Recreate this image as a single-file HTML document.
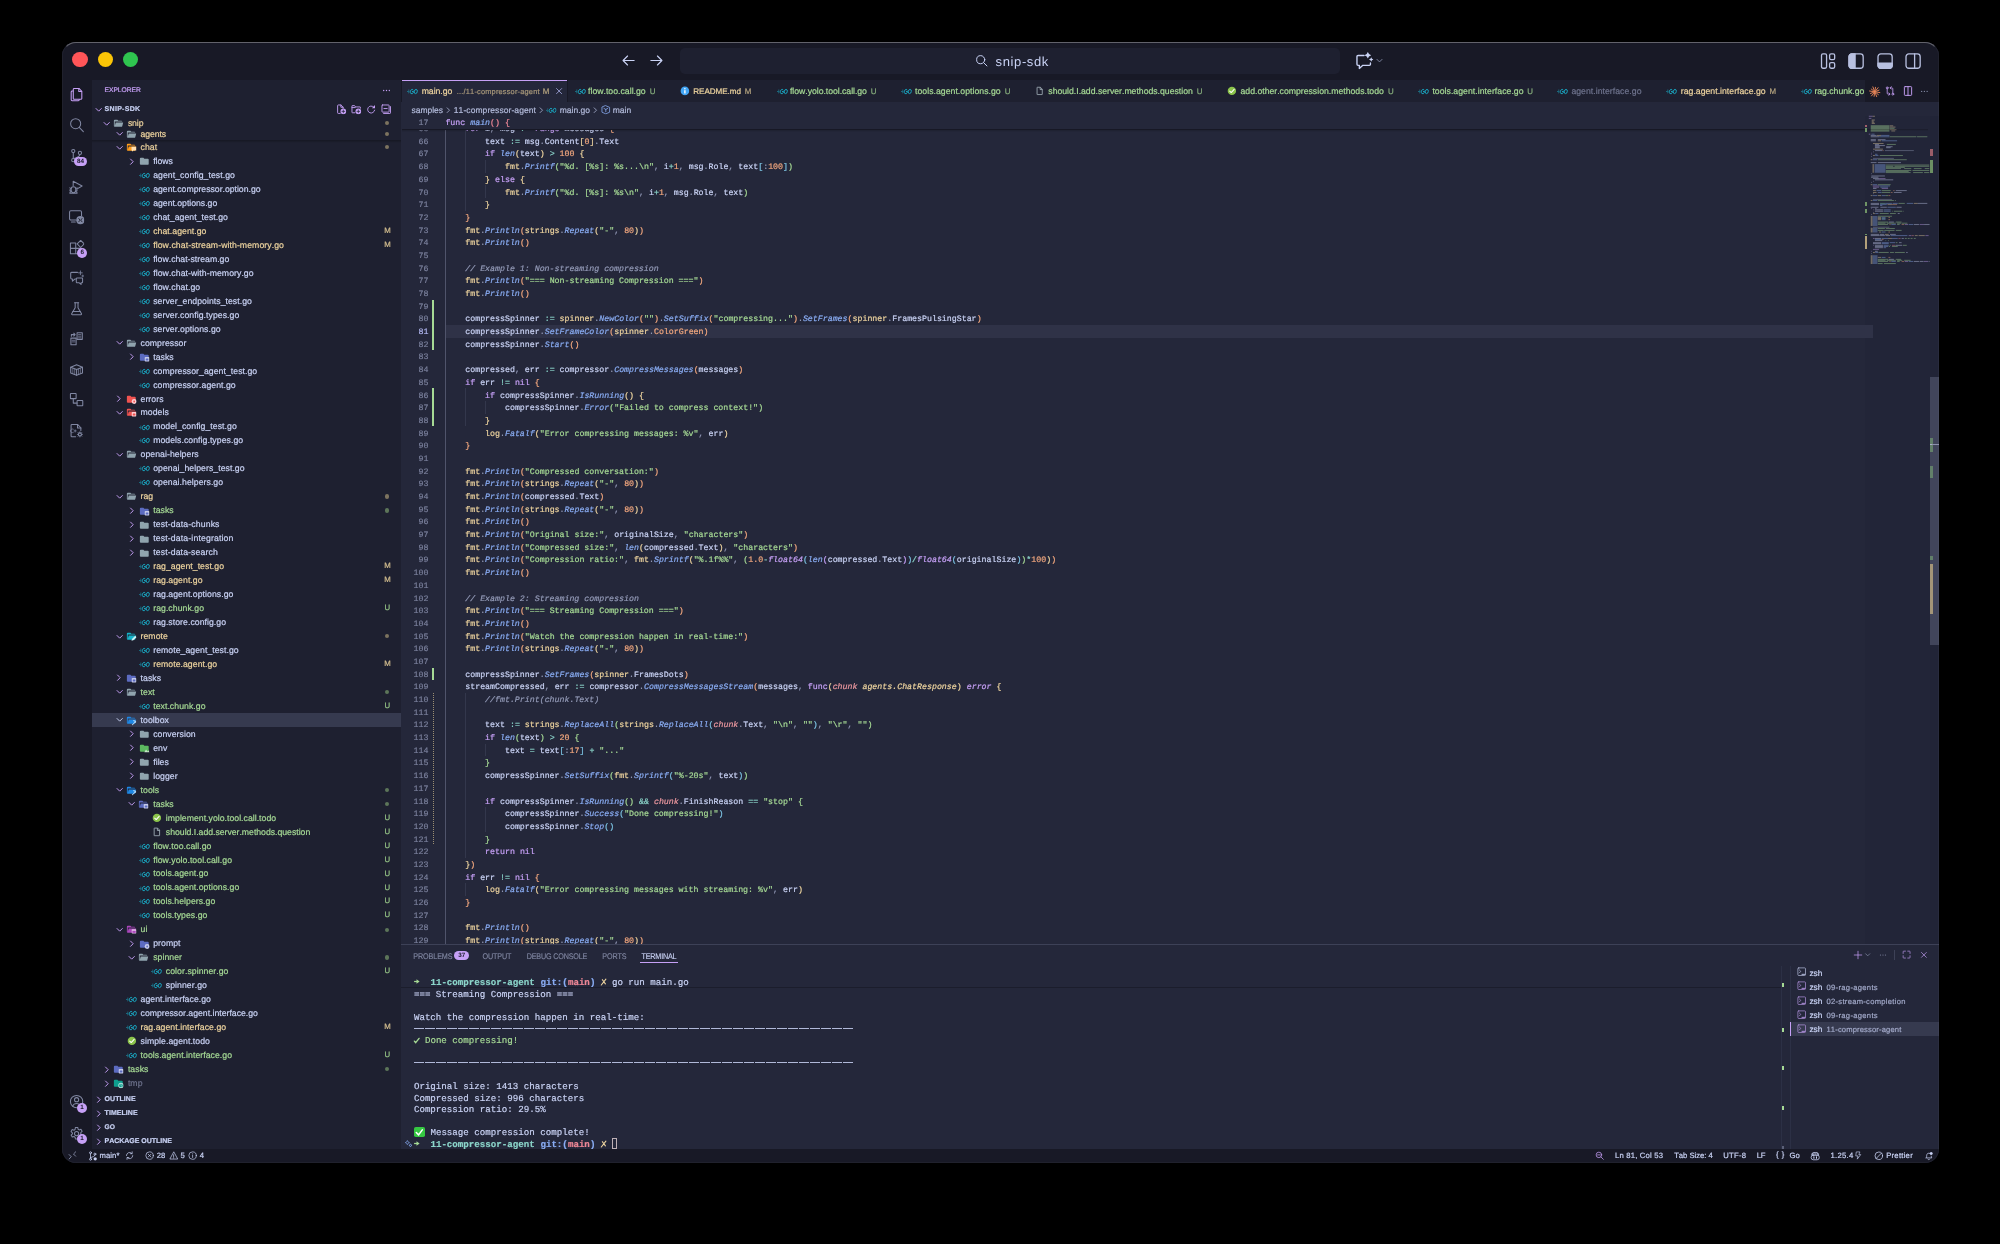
<!DOCTYPE html><html><head><meta charset="utf-8"><title>snip-sdk</title><style>
html,body{margin:0;padding:0;background:#000;overflow:hidden;}
body{width:2000px;height:1244px;position:relative;overflow:hidden;font-family:"Liberation Sans",sans-serif;font-kerning:none;-webkit-font-smoothing:antialiased;text-rendering:geometricPrecision;}
.win{position:absolute;left:62px;top:42px;width:1876.700px;height:1120.600px;border-radius:14px;overflow:hidden;background:#24273a;}
.page{will-change:transform;position:absolute;left:-62px;top:-42px;width:2000px;height:1244px;}
.t{position:absolute;white-space:pre;display:block;-webkit-text-stroke:0.2px currentColor;}
.c{-webkit-text-stroke:0.2px currentColor;position:absolute;white-space:pre;font-family:"Liberation Mono",monospace;font-size:8.274px;line-height:13px;height:13px;}
.m{-webkit-text-stroke:0.18px currentColor;position:absolute;white-space:pre;font-family:"Liberation Mono",monospace;font-size:9.165px;line-height:13px;height:13px;}
.edge{position:absolute;left:62px;top:42px;width:1876.700px;height:1120.600px;border-radius:14px;box-sizing:border-box;border:1px solid rgba(255,255,255,.035);border-top-color:rgba(255,255,255,.32);pointer-events:none;}
svg{overflow:visible}
</style></head><body><svg width="0" height="0" style="position:absolute"><defs><symbol id="fd" viewBox="0 0 24 24"><path d="M10 4H4c-1.11 0-2 .89-2 2v12c0 1.1.9 2 2 2h16c1.1 0 2-.9 2-2V8c0-1.11-.9-2-2-2h-8l-2-2z" fill="#90a4ae"/></symbol><symbol id="fdo" viewBox="0 0 24 24"><path d="M19 20H4c-1.11 0-2-.9-2-2V6c0-1.11.89-2 2-2h6l2 2h7c1.1 0 2 .9 2 2H4v10l2.14-8h17.07l-2.28 8.5c-.23.87-1.01 1.5-1.93 1.5z" fill="#90a4ae"/></symbol><symbol id="f-chat-o" viewBox="0 0 24 24"><path d="M19 20H4c-1.11 0-2-.9-2-2V6c0-1.11.89-2 2-2h6l2 2h7c1.1 0 2 .9 2 2H4v10l2.14-8h17.07l-2.28 8.5c-.23.87-1.01 1.5-1.93 1.5z" fill="#ff9d1c"/><path d="M12.5 11h11v8h-7l-3 3v-3h-1z" fill="#ffe0b2"/></symbol><symbol id="f-tasks" viewBox="0 0 24 24"><path d="M10 4H4c-1.11 0-2 .89-2 2v12c0 1.1.9 2 2 2h16c1.1 0 2-.9 2-2V8c0-1.11-.9-2-2-2h-8l-2-2z" fill="#5c6bc0"/><rect x="13" y="11.5" width="10.5" height="10" rx="1.6" fill="#c5cae9"/><rect x="15.3" y="15" width="6" height="4" rx="0.8" fill="#5c6bc0"/></symbol><symbol id="f-tasks-o" viewBox="0 0 24 24"><path d="M19 20H4c-1.11 0-2-.9-2-2V6c0-1.11.89-2 2-2h6l2 2h7c1.1 0 2 .9 2 2H4v10l2.14-8h17.07l-2.28 8.5c-.23.87-1.01 1.5-1.93 1.5z" fill="#5c6bc0"/><rect x="13" y="11.5" width="10.5" height="10" rx="1.6" fill="#c5cae9"/><rect x="15.3" y="15" width="6" height="4" rx="0.8" fill="#5c6bc0"/></symbol><symbol id="f-err" viewBox="0 0 24 24"><path d="M10 4H4c-1.11 0-2 .89-2 2v12c0 1.1.9 2 2 2h16c1.1 0 2-.9 2-2V8c0-1.11-.9-2-2-2h-8l-2-2z" fill="#ef5350"/><circle cx="18.5" cy="17" r="5.6" fill="#ffcdd2"/><circle cx="18.5" cy="17" r="2" fill="#ef5350"/></symbol><symbol id="f-models-o" viewBox="0 0 24 24"><path d="M19 20H4c-1.11 0-2-.9-2-2V6c0-1.11.89-2 2-2h6l2 2h7c1.1 0 2 .9 2 2H4v10l2.14-8h17.07l-2.28 8.5c-.23.87-1.01 1.5-1.93 1.5z" fill="#ef5350"/><rect x="13" y="11.5" width="10.5" height="10" rx="1.6" fill="#ffcdd2"/><rect x="15.3" y="15" width="6" height="4" rx="0.8" fill="#ef5350"/></symbol><symbol id="f-remote-o" viewBox="0 0 24 24"><path d="M19 20H4c-1.11 0-2-.9-2-2V6c0-1.11.89-2 2-2h6l2 2h7c1.1 0 2 .9 2 2H4v10l2.14-8h17.07l-2.28 8.5c-.23.87-1.01 1.5-1.93 1.5z" fill="#16b3c9"/><path d="M12.5 22l1-4 7.5-7 3 3-7.5 7z" fill="#c9f1f6"/></symbol><symbol id="f-tools-o" viewBox="0 0 24 24"><path d="M19 20H4c-1.11 0-2-.9-2-2V6c0-1.11.89-2 2-2h6l2 2h7c1.1 0 2 .9 2 2H4v10l2.14-8h17.07l-2.28 8.5c-.23.87-1.01 1.5-1.93 1.5z" fill="#1e88e5"/><path d="M13 22.5l7.5-8.2 2.6 2.4-1.3 1.3-1.2-.9-6.2 6.6z" fill="#bbdefb"/><path d="M17 11.5l6.5 2.2-1.2 2.2-6-2.4z" fill="#bbdefb"/></symbol><symbol id="f-env" viewBox="0 0 24 24"><path d="M10 4H4c-1.11 0-2 .89-2 2v12c0 1.1.9 2 2 2h16c1.1 0 2-.9 2-2V8c0-1.11-.9-2-2-2h-8l-2-2z" fill="#5cb860"/><path d="M12 21l4-6 3 4 2-2.5 3 4.5z" fill="#c8e6c9"/></symbol><symbol id="f-ui-o" viewBox="0 0 24 24"><path d="M19 20H4c-1.11 0-2-.9-2-2V6c0-1.11.89-2 2-2h6l2 2h7c1.1 0 2 .9 2 2H4v10l2.14-8h17.07l-2.28 8.5c-.23.87-1.01 1.5-1.93 1.5z" fill="#ab47bc"/><rect x="13" y="12" width="10.5" height="9.5" rx="1" fill="#e1bee7"/><rect x="14.5" y="15.5" width="7.5" height="4.6" fill="#ab47bc"/></symbol><symbol id="f-prompt" viewBox="0 0 24 24"><path d="M10 4H4c-1.11 0-2 .89-2 2v12c0 1.1.9 2 2 2h16c1.1 0 2-.9 2-2V8c0-1.11-.9-2-2-2h-8l-2-2z" fill="#5c6bc0"/><circle cx="18.5" cy="17" r="5.6" fill="#c5cae9"/><circle cx="18.5" cy="17" r="2" fill="#5c6bc0"/></symbol><symbol id="f-tmp" viewBox="0 0 24 24"><path d="M10 4H4c-1.11 0-2 .89-2 2v12c0 1.1.9 2 2 2h16c1.1 0 2-.9 2-2V8c0-1.11-.9-2-2-2h-8l-2-2z" fill="#0e9e8e"/><circle cx="18" cy="17" r="6" fill="#b2dfdb"/><circle cx="18" cy="17" r="4.2" fill="#0e9e8e"/><path d="M18 13.8v3.4l2.3 1.5" stroke="#b2dfdb" stroke-width="1.5" fill="none"/></symbol><symbol id="go" viewBox="0 0 32 32"><g fill="none" stroke="#19b4cf" stroke-linecap="butt" transform="skewX(-8) translate(2.300 0)"><g stroke-width="1.400"><path d="M2.500 12.300H6.500"/><path d="M0 16.200H6.500"/><path d="M3.500 20H6.500"/></g><g stroke-width="2.500"><path d="M18 12.200a5 6.200 0 1 0 1.100 6.300v-2.300h-4.300"/><ellipse cx="25.800" cy="16.200" rx="4.400" ry="6.200"/></g></g></symbol><symbol id="todo" viewBox="0 0 24 24"><circle cx="12" cy="12" r="10.3" fill="#8bc34a"/><path d="M6.7 12.4l3.6 3.6 7.2-7.6" fill="none" stroke="#fff" stroke-width="2.6" stroke-linecap="round" stroke-linejoin="round"/></symbol><symbol id="doc" viewBox="0 0 24 24"><path d="M6 2.5h8l5 5V21a.6.6 0 0 1-.6.6H6a.6.6 0 0 1-.6-.6V3.100a.6.6 0 0 1 .6-.6zM13.5 3v5.500h5.500" fill="none" stroke="#b4c2cb" stroke-width="1.900" stroke-linejoin="round"/></symbol><symbol id="info" viewBox="0 0 24 24"><circle cx="12" cy="12" r="10.5" fill="#42a5f5"/><rect x="10.300" y="10.300" width="3.400" height="8" fill="#fff"/><circle cx="12" cy="6.800" r="2" fill="#fff"/></symbol><symbol id="chev-d" viewBox="0 0 16 16"><g fill="none" stroke="currentColor" stroke-width="1.65" stroke-linecap="round" stroke-linejoin="round"><path d="M3.500 6l4.500 4.500L12.500 6"/></g></symbol><symbol id="chev-r" viewBox="0 0 16 16"><g fill="none" stroke="currentColor" stroke-width="1.65" stroke-linecap="round" stroke-linejoin="round"><path d="M6 3.500l4.500 4.500L6 12.500"/></g></symbol><symbol id="a-files" viewBox="0 0 16 16"><g fill="none" stroke="currentColor" stroke-width="1.1" stroke-linecap="round" stroke-linejoin="round"><path d="M5.500 1.500h5l3 3v7.500a1 1 0 0 1-1 1h-7a1 1 0 0 1-1-1v-9.500a1 1 0 0 1 1-1z"/><path d="M10.300 1.700v3h3"/><path d="M4.300 4.200h-1a1 1 0 0 0-1 1v8.300a1 1 0 0 0 1 1h6.500a1 1 0 0 0 1-1v-.4"/></g></symbol><symbol id="a-search" viewBox="0 0 16 16"><g fill="none" stroke="currentColor" stroke-width="1.1" stroke-linecap="round" stroke-linejoin="round"><circle cx="7" cy="6" r="5.300"/><path d="M10.800 9.800l4.300 4.600"/></g></symbol><symbol id="a-scm" viewBox="0 0 16 16"><g fill="none" stroke="currentColor" stroke-width="1.1" stroke-linecap="round" stroke-linejoin="round"><circle cx="4.500" cy="3.200" r="1.700"/><circle cx="4.500" cy="12.800" r="1.700"/><circle cx="11.500" cy="5.200" r="1.700"/><path d="M4.500 4.900v6.200"/><path d="M11.500 6.900c0 2.600-3.500 3-7 4.300"/></g></symbol><symbol id="a-debug" viewBox="0 0 16 16"><g fill="none" stroke="currentColor" stroke-width="1.1" stroke-linecap="round" stroke-linejoin="round"><path d="M4.400 7V2.300l9.400 5-5.200 3.100"/><ellipse cx="4.700" cy="11.300" rx="2.600" ry="3.100"/><path d="M0.900 9.300l1.300.8M0.700 11.700h1.300M0.900 14l1.300-.8M8.500 9.300l-1.300.8M8.700 11.700h-1.300M8.500 14l-1.300-.8M0.900 15.100h7.600"/></g></symbol><symbol id="a-remote" viewBox="0 0 16 16"><g fill="none" stroke="currentColor" stroke-width="1.1" stroke-linecap="round" stroke-linejoin="round"><path d="M7.500 10.600H2a1.400 1.400 0 0 1-1.400-1.400V2.200A1.400 1.400 0 0 1 2 .8h9.800a1.400 1.400 0 0 1 1.400 1.400V6"/><path d="M2.600 12.600h4"/><circle cx="12" cy="10.700" r="4.300" fill="currentColor" stroke="none"/><path d="M10.300 9l1.300 1.700-1.300 1.700M13.700 9l-1.300 1.700 1.300 1.700" stroke="#181926" stroke-width="0.900"/></g></symbol><symbol id="a-ext" viewBox="0 0 16 16"><g fill="none" stroke="currentColor" stroke-width="1.1" stroke-linecap="round" stroke-linejoin="round"><path d="M1.500 3.200h5.600v11.200H1.500zM1.500 8.800h11.200v5.600H7.100V8.800"/><path d="M12.300 0.500l3.700 3.700-3.700 3.700-3.700-3.700z"/></g></symbol><symbol id="a-chat" viewBox="0 0 16 16"><g fill="none" stroke="currentColor" stroke-width="1.1" stroke-linecap="round" stroke-linejoin="round"><path d="M9 2.500H2.800a1 1 0 0 0-1 1v5a1 1 0 0 0 1 1h.8v2.300l2.500-2.300H7"/><path d="M8.500 8.500h5a.8.8 0 0 1 .8.800v3.400a.8.800 0 0 1-.8.800h-.8v1.700l-1.900-1.700H8.500a.8.800 0 0 1-.8-.8V9.300a.8.800 0 0 1 .8-.8z"/><path d="M12 1v4M10 3h4" stroke-width="0.900"/><path d="M14.500 5.300v2M13.500 6.300h2" stroke-width="0.800"/></g></symbol><symbol id="a-beaker" viewBox="0 0 16 16"><g fill="none" stroke="currentColor" stroke-width="1.1" stroke-linecap="round" stroke-linejoin="round"><path d="M5.800 1.800h4.400"/><path d="M6.500 1.800v5.200L2.800 13.400a.7.700 0 0 0 .6 1h9.200a.7.700 0 0 0 .6-1L9.500 7V1.800"/><path d="M4 11h8"/></g></symbol><symbol id="a-compare" viewBox="0 0 16 16"><g fill="none" stroke="currentColor" stroke-width="1.1" stroke-linecap="round" stroke-linejoin="round"><path d="M8.500 1.800h5.500v7H8.500z"/><path d="M10 3.800h2.500M10 5.500h2.500M10 7.200h2.500" stroke-width="0.800"/><path d="M2 7.500h5.500v7H2z"/><path d="M3.300 9.800h3M3.300 11.500h3" stroke-width="0.800"/><path d="M2.500 5.500V3.800h4M5 2.300l1.500 1.500L5 5.300"/></g></symbol><symbol id="a-container" viewBox="0 0 16 16"><g fill="none" stroke="currentColor" stroke-width="1.1" stroke-linecap="round" stroke-linejoin="round"><path d="M1.800 5.500L8 3l6.200 2.500v6L8 14l-6.200-2.500z"/><path d="M1.800 5.500L8 8l6.200-2.500M8 8v6"/><path d="M4 7v5M6 7.800v5M10 7.800v5M12 7v5" stroke-width="0.700"/></g></symbol><symbol id="a-flow" viewBox="0 0 16 16"><g fill="none" stroke="currentColor" stroke-width="1.1" stroke-linecap="round" stroke-linejoin="round"><rect x="1.500" y="1.500" width="6" height="5.500" rx="0.500"/><rect x="8.500" y="9" width="6" height="5.500" rx="0.500"/><path d="M4.500 7v4.700h4"/></g></symbol><symbol id="a-filegear" viewBox="0 0 16 16"><g fill="none" stroke="currentColor" stroke-width="1.1" stroke-linecap="round" stroke-linejoin="round"><path d="M7 14.500H3a.8.800 0 0 1-.8-.8V2.300a.8.800 0 0 1 .8-.8h6l3.500 3.500v3"/><path d="M9 1.700v3.500h3.500"/><path d="M4.500 6.500a2 2 0 1 0 0 3.500M6.500 7.200v2.300M5.400 8.300h2.200" stroke-width="0.800"/><circle cx="11.500" cy="12" r="1.600"/><path d="M11.500 9.300v1M11.500 13.700v1M8.800 12h1M13.200 12h1M9.600 10.100l.7.700M12.700 13.200l.7.700M9.600 13.900l.7-.7M12.700 10.800l.7-.7" stroke-width="0.900"/></g></symbol><symbol id="a-account" viewBox="0 0 16 16"><g fill="none" stroke="currentColor" stroke-width="1.1" stroke-linecap="round" stroke-linejoin="round"><circle cx="8" cy="8" r="6.500"/><circle cx="8" cy="6" r="2.200"/><path d="M3.800 12.800c.8-2 2.300-2.800 4.200-2.800s3.400.8 4.200 2.800"/></g></symbol><symbol id="a-gear" viewBox="0 0 16 16"><g fill="none" stroke="currentColor" stroke-width="1.1" stroke-linecap="round" stroke-linejoin="round"><circle cx="8" cy="8" r="2.200"/><path d="M6.800 1.500h2.400l.4 1.900 1.200.7 1.800-.6 1.200 2.100-1.400 1.300v1.400l1.400 1.300-1.200 2.100-1.800-.6-1.200.7-.4 1.900H6.800l-.4-1.900-1.200-.7-1.800.6-1.200-2.100 1.400-1.300V7.200L2.200 5.900l1.200-2.100 1.800.6 1.200-.7z"/></g></symbol><symbol id="h-newfile" viewBox="0 0 16 16"><g fill="none" stroke="currentColor" stroke-width="1.4" stroke-linecap="round" stroke-linejoin="round"><path d="M6.500 14.500H3.500a1 1 0 0 1-1-1V2.500a1 1 0 0 1 1-1h4l3.500 3.500V6.500"/><path d="M7.500 1.500V5H11"/><circle cx="11.300" cy="11.400" r="4.300" fill="currentColor" stroke="none"/><path d="M11.300 9.300v4.200M9.200 11.400h4.200" stroke="#1e2030" stroke-width="1.100"/></g></symbol><symbol id="h-newfolder" viewBox="0 0 16 16"><g fill="none" stroke="currentColor" stroke-width="1.4" stroke-linecap="round" stroke-linejoin="round"><path d="M6 13.500H2a.5.500 0 0 1-.5-.5V3a.5.500 0 0 1 .5-.5h3.500l1.500 2H14a.5.500 0 0 1 .5.500v1.500"/><path d="M1.500 5.500h5"/><circle cx="11.300" cy="11.400" r="4.300" fill="currentColor" stroke="none"/><path d="M11.300 9.300v4.200M9.200 11.400h4.200" stroke="#1e2030" stroke-width="1.100"/></g></symbol><symbol id="h-refresh" viewBox="0 0 16 16"><g fill="none" stroke="currentColor" stroke-width="1.4" stroke-linecap="round" stroke-linejoin="round"><path d="M13.300 9.500A5.400 5.400 0 1 1 11.600 4.500"/><path d="M13.900 1.600V6.400H9.100z" fill="currentColor" stroke="none"/></g></symbol><symbol id="h-collapse" viewBox="0 0 16 16"><g fill="none" stroke="currentColor" stroke-width="1.4" stroke-linecap="round" stroke-linejoin="round"><rect x="1.500" y="1.500" width="11" height="11" rx="1"/><path d="M4.500 7h5"/><path d="M4 14.600h9.600a1 1 0 0 0 1-1V4"/></g></symbol><symbol id="arrow-l" viewBox="0 0 16 16"><g fill="none" stroke="currentColor" stroke-width="1.2" stroke-linecap="round" stroke-linejoin="round"><path d="M14 8H2.500M7 3.200L2.200 8 7 12.800"/></g></symbol><symbol id="arrow-r" viewBox="0 0 16 16"><g fill="none" stroke="currentColor" stroke-width="1.2" stroke-linecap="round" stroke-linejoin="round"><path d="M2 8h11.500M9 3.200L13.800 8 9 12.800"/></g></symbol><symbol id="t-chat" viewBox="0 0 17 16"><g fill="none" stroke="currentColor" stroke-width="1.25" stroke-linecap="round" stroke-linejoin="round"><path d="M8.300 3.200H2.800a1 1 0 0 0-1 1v7a1 1 0 0 0 1 1H4v3l3.200-3h6a1 1 0 0 0 1-1V10"/><path d="M11.8 -0.2Q12.358 2.342 14.9 2.9Q12.358 3.458 11.8 6Q11.242 3.458 8.7 2.9Q11.242 2.342 11.8 -0.2z" fill="currentColor" stroke="none"/><path d="M14.9 4.8Q15.278 6.522 17 6.9Q15.278 7.278 14.9 9Q14.522 7.278 12.8 6.9Q14.522 6.522 14.9 4.8z" fill="currentColor" stroke="none"/></g></symbol><symbol id="l-custom" viewBox="0 0 16 16"><g fill="none" stroke="currentColor" stroke-width="1.3" stroke-linecap="round" stroke-linejoin="round"><rect x="1.500" y="0.900" width="5" height="14.200" rx="1.400"/><rect x="9.500" y="0.900" width="5" height="5.600" rx="1.400"/><rect x="9.500" y="9.500" width="5" height="5.600" rx="1.400"/></g></symbol><symbol id="l-left" viewBox="0 0 16 16"><g fill="none" stroke="currentColor" stroke-width="1.3" stroke-linecap="round" stroke-linejoin="round"><rect x="1" y="0.900" width="14" height="14.200" rx="2.800"/><path d="M3.800 0.900H7V15.100H3.800A2.800 2.800 0 0 1 1 12.300V3.700A2.800 2.800 0 0 1 3.800 0.900z" fill="currentColor"/></g></symbol><symbol id="l-bottom" viewBox="0 0 16 16"><g fill="none" stroke="currentColor" stroke-width="1.3" stroke-linecap="round" stroke-linejoin="round"><rect x="1" y="0.900" width="14" height="14.200" rx="2.800"/><path d="M1 10H15V12.300A2.800 2.800 0 0 1 12.200 15.100H3.800A2.800 2.800 0 0 1 1 12.300z" fill="currentColor"/></g></symbol><symbol id="l-right" viewBox="0 0 16 16"><g fill="none" stroke="currentColor" stroke-width="1.3" stroke-linecap="round" stroke-linejoin="round"><rect x="1" y="0.900" width="14" height="14.200" rx="2.800"/><path d="M9.500 0.900V15.100"/></g></symbol><symbol id="spark" viewBox="0 0 16 16"><path d="M9.58 8.24L15.22 9.09M9.25 9.00L12.92 11.93M8.58 9.49L10.66 14.80M7.76 9.58L7.06 14.23M7.00 9.25L3.45 13.71M6.51 8.58L2.13 10.30M6.42 7.76L0.78 6.91M6.75 7.00L3.08 4.07M7.42 6.51L5.34 1.20M8.24 6.42L8.94 1.77M9.00 6.75L12.55 2.29M9.49 7.42L13.87 5.70" stroke="#ef8a5a" stroke-width="1.25" stroke-linecap="round" fill="none"/><circle cx="8" cy="8" r="1.6" fill="#ef8a5a"/></symbol><symbol id="t-compare" viewBox="0 0 16 16"><g fill="none" stroke="currentColor" stroke-width="1.3" stroke-linecap="round" stroke-linejoin="round"><circle cx="3.500" cy="3" r="1.500"/><circle cx="12.500" cy="13" r="1.500"/><path d="M3.500 4.500v7a1.500 1.500 0 0 0 1.500 1.500h2.500M6 11l2 2-2 2"/><path d="M12.500 11.500v-7a1.500 1.500 0 0 0-1.500-1.500H8.500M10 5L8 3l2-2"/></g></symbol><symbol id="t-split" viewBox="0 0 16 16"><g fill="none" stroke="currentColor" stroke-width="1.5" stroke-linecap="round" stroke-linejoin="round"><rect x="2.200" y="1" width="11.600" height="14" rx="1.200"/><path d="M8 1v14"/></g></symbol><symbol id="dots" viewBox="0 0 16 16"><g fill="currentColor"><circle cx="3" cy="8" r="1.200"/><circle cx="8" cy="8" r="1.200"/><circle cx="13" cy="8" r="1.200"/></g></symbol><symbol id="x" viewBox="0 0 16 16"><g fill="none" stroke="currentColor" stroke-width="1.4" stroke-linecap="round" stroke-linejoin="round"><path d="M3 3l10 10M13 3L3 13"/></g></symbol><symbol id="sym-method" viewBox="0 0 16 16"><g fill="none" stroke="currentColor" stroke-width="1.3" stroke-linecap="round" stroke-linejoin="round"><path d="M8 1.200l6.400 2.800v8L8 14.800 1.600 12V4z"/><path d="M4.800 5.600L8 7.400l3.200-1.800M8 7.400V11.200"/></g></symbol><symbol id="plus" viewBox="0 0 16 16"><g fill="none" stroke="currentColor" stroke-width="1.15" stroke-linecap="round" stroke-linejoin="round"><path d="M8 2v12M2 8h12"/></g></symbol><symbol id="maximize" viewBox="0 0 16 16"><g fill="none" stroke="currentColor" stroke-width="1.15" stroke-linecap="round" stroke-linejoin="round"><path d="M2 6V3a1 1 0 0 1 1-1h3M10 2h3a1 1 0 0 1 1 1v3M14 10v3a1 1 0 0 1-1 1h-3M6 14H3a1 1 0 0 1-1-1v-3"/></g></symbol><symbol id="term" viewBox="0 0 16 16"><g fill="none" stroke="currentColor" stroke-width="1.05" stroke-linecap="round" stroke-linejoin="round"><rect x="1.500" y="1.500" width="13" height="13" rx="1.500"/><path d="M4 5l2.500 2.500L4 10"/><path d="M8.500 12.500h5" stroke-width="1.500"/></g></symbol><symbol id="s-remote" viewBox="0 0 16 16"><g fill="none" stroke="currentColor" stroke-width="1.5" stroke-linecap="round" stroke-linejoin="round"><path d="M2 6.500l4 4-4 4M14 1.500l-4 4 4 4" /></g></symbol><symbol id="s-branch" viewBox="0 0 16 16"><g fill="none" stroke="currentColor" stroke-width="1.2" stroke-linecap="round" stroke-linejoin="round"><circle cx="4" cy="2.800" r="1.600"/><circle cx="4" cy="13.200" r="1.600"/><circle cx="11" cy="5" r="1.600"/><path d="M4 4.400v7.200M11 6.600c0 2.500-3.500 2.500-7 4"/><circle cx="11.500" cy="12.500" r="2.600" fill="currentColor" stroke="none"/></g></symbol><symbol id="s-sync" viewBox="0 0 16 16"><g fill="none" stroke="currentColor" stroke-width="1.2" stroke-linecap="round" stroke-linejoin="round"><path d="M2.500 8a5.500 5.500 0 0 1 9.600-3.600M13.500 8a5.500 5.500 0 0 1-9.600 3.600"/><path d="M12.500 1.500v3.200H9.300M3.500 14.500v-3.200h3.200"/></g></symbol><symbol id="s-error" viewBox="0 0 16 16"><g fill="none" stroke="currentColor" stroke-width="1.2" stroke-linecap="round" stroke-linejoin="round"><circle cx="8" cy="8" r="6.500"/><path d="M5.500 5.500l5 5M10.500 5.500l-5 5"/></g></symbol><symbol id="s-warn" viewBox="0 0 16 16"><g fill="none" stroke="currentColor" stroke-width="1.2" stroke-linecap="round" stroke-linejoin="round"><path d="M8 2L1.500 14h13z"/><path d="M8 6.500v4M8 12v.3"/></g></symbol><symbol id="s-info" viewBox="0 0 16 16"><g fill="none" stroke="currentColor" stroke-width="1.2" stroke-linecap="round" stroke-linejoin="round"><circle cx="8" cy="8" r="6.500"/><path d="M8 7.300v4M8 4.800v.3"/></g></symbol><symbol id="s-zoom" viewBox="0 0 16 16"><g fill="none" stroke="currentColor" stroke-width="1.3" stroke-linecap="round" stroke-linejoin="round"><circle cx="6.800" cy="6.800" r="4.800"/><path d="M10.300 10.300l4.200 4.200M4.500 6.800h4.600"/></g></symbol><symbol id="s-copilot" viewBox="0 0 16 16"><g fill="none" stroke="currentColor" stroke-width="1.2" stroke-linecap="round" stroke-linejoin="round"><path d="M3 6.500c0-2.500 1.500-4 5-4s5 1.500 5 4"/><rect x="1.800" y="6.200" width="12.400" height="7.300" rx="3.200"/><path d="M6 9v2M10 9v2" stroke-width="1.600"/><path d="M3.500 3.500c1.500-1 3-1 4.500 0 1.500-1 3-1 4.500 0v2.500c-1.500 1-3 1-4.500 0-1.500 1-3 1-4.500 0z"/></g></symbol><symbol id="s-zap" viewBox="0 0 16 16"><g fill="none" stroke="currentColor" stroke-width="1.2" stroke-linecap="round" stroke-linejoin="round"><path d="M5 1.500h6l-2 5h3.500L6 15l1.500-6H4z"/></g></symbol><symbol id="s-prettier" viewBox="0 0 16 16"><g fill="none" stroke="currentColor" stroke-width="1.3" stroke-linecap="round" stroke-linejoin="round"><circle cx="8" cy="8" r="6.300"/><path d="M3.600 12.400l8.800-8.800"/></g></symbol><symbol id="s-bell" viewBox="0 0 16 16"><g fill="none" stroke="currentColor" stroke-width="1.2" stroke-linecap="round" stroke-linejoin="round"><path d="M3.500 11.500c1-1 1-2.500 1-4.500a3.500 3.500 0 0 1 5-3.200M12 8.500c.1 1.200.4 2.200 1 3H3.500M6.500 13.500a1.600 1.600 0 0 0 3 0"/><circle cx="12" cy="4" r="2.500" fill="currentColor" stroke="none"/></g></symbol><symbol id="t-search" viewBox="0 0 16 16"><g fill="none" stroke="currentColor" stroke-width="1.2" stroke-linecap="round" stroke-linejoin="round"><circle cx="7" cy="7" r="5"/><path d="M10.700 10.700l4 4"/></g></symbol><symbol id="t-wand" viewBox="0 0 16 16"><g fill="none" stroke="currentColor" stroke-width="1.3" stroke-linejoin="round"><path d="M5 1l1.400 3.100L9.500 5.500 6.400 6.900 5 10 3.600 6.900 .5 5.500l3.100-1.400z"/><path d="M11.500 8l1 2.300 2.300 1-2.300 1-1 2.300-1-2.300-2.300-1 2.300-1z"/></g></symbol></defs></svg><div class="win"><div class="page"><div style="position:absolute;left:62px;top:42px;width:1877px;height:38.2px;background:#181926;"></div><div style="position:absolute;left:72.3px;top:51.5px;width:15.6px;height:15.6px;border-radius:50%;background:#ff5558"></div><div style="position:absolute;left:97.6px;top:51.5px;width:15.6px;height:15.6px;border-radius:50%;background:#fbc507"></div><div style="position:absolute;left:122.8px;top:51.5px;width:15.6px;height:15.6px;border-radius:50%;background:#2fc54f"></div><svg style="position:absolute;left:620.5px;top:53px;color:#cad3f5" width="15" height="15"><use href="#arrow-l"/></svg><svg style="position:absolute;left:649px;top:53px;color:#cad3f5" width="15" height="15"><use href="#arrow-r"/></svg><div style="position:absolute;left:680px;top:48px;width:660px;height:25.6px;background:#1e2030;border-radius:5px;"></div><svg style="position:absolute;left:974.5px;top:54px;color:#cad3f5" width="13" height="13"><use href="#t-search"/></svg><span class="t" style="left:995.5px;top:50.9px;height:21px;line-height:21px;font-size:13px;color:#cad3f5;letter-spacing:0.637px;-webkit-text-stroke:0;">snip-sdk</span><svg style="position:absolute;left:1354.5px;top:51.5px;color:#cad3f5" width="18.5" height="17.5"><use href="#t-chat"/></svg><svg style="position:absolute;left:1374.5px;top:55.5px;color:#8087a2" width="9" height="9"><use href="#chev-d"/></svg><svg style="position:absolute;left:1819.7px;top:52.7px;color:#b8c0e0" width="16.2" height="16.2"><use href="#l-custom"/></svg><svg style="position:absolute;left:1848.2px;top:52.7px;color:#b8c0e0" width="16.2" height="16.2"><use href="#l-left"/></svg><svg style="position:absolute;left:1876.7px;top:52.7px;color:#b8c0e0" width="16.2" height="16.2"><use href="#l-bottom"/></svg><svg style="position:absolute;left:1905.4px;top:52.7px;color:#b8c0e0" width="16.2" height="16.2"><use href="#l-right"/></svg><div style="position:absolute;left:62px;top:80px;width:30.3px;height:1069px;background:#181926;"></div><svg style="position:absolute;left:68.7px;top:87.2px;color:#c6a0f6" width="15.2" height="15.2"><use href="#a-files"/></svg><svg style="position:absolute;left:68.7px;top:118px;color:#8087a2" width="15.2" height="15.2"><use href="#a-search"/></svg><svg style="position:absolute;left:68.7px;top:148.4px;color:#8087a2" width="15.2" height="15.2"><use href="#a-scm"/></svg><svg style="position:absolute;left:68.7px;top:179px;color:#8087a2" width="15.2" height="15.2"><use href="#a-debug"/></svg><svg style="position:absolute;left:68.7px;top:209.6px;color:#8087a2" width="15.2" height="15.2"><use href="#a-remote"/></svg><svg style="position:absolute;left:68.7px;top:240px;color:#8087a2" width="15.2" height="15.2"><use href="#a-ext"/></svg><svg style="position:absolute;left:68.7px;top:270px;color:#8087a2" width="15.2" height="15.2"><use href="#a-chat"/></svg><svg style="position:absolute;left:68.7px;top:300.8px;color:#8087a2" width="15.2" height="15.2"><use href="#a-beaker"/></svg><svg style="position:absolute;left:68.7px;top:331.2px;color:#8087a2" width="15.2" height="15.2"><use href="#a-compare"/></svg><svg style="position:absolute;left:68.7px;top:362px;color:#8087a2" width="15.2" height="15.2"><use href="#a-container"/></svg><svg style="position:absolute;left:68.7px;top:392.2px;color:#8087a2" width="15.2" height="15.2"><use href="#a-flow"/></svg><svg style="position:absolute;left:68.7px;top:422.6px;color:#8087a2" width="15.2" height="15.2"><use href="#a-filegear"/></svg><svg style="position:absolute;left:68.7px;top:1094.4px;color:#8087a2" width="15.2" height="15.2"><use href="#a-account"/></svg><svg style="position:absolute;left:68.7px;top:1125.9px;color:#8087a2" width="15.2" height="15.2"><use href="#a-gear"/></svg><div style="position:absolute;left:73.8px;top:156.5px;width:13.2px;height:9.6px;border-radius:4.8px;background:#c6a0f6;color:#181926;font-size:6.3px;line-height:10px;text-align:center;font-weight:bold">84</div><div style="position:absolute;left:77.3px;top:248.1px;width:9.8px;height:9.8px;border-radius:4.9px;background:#c6a0f6;color:#181926;font-size:6.3px;line-height:10.2px;text-align:center;font-weight:bold">6</div><div style="position:absolute;left:77px;top:1103.4px;width:10px;height:10px;border-radius:5px;background:#c6a0f6;color:#181926;font-size:6.3px;line-height:10.4px;text-align:center;font-weight:bold">1</div><div style="position:absolute;left:77px;top:1134px;width:10px;height:10px;border-radius:5px;background:#c6a0f6;color:#181926;font-size:6.3px;line-height:10.4px;text-align:center;font-weight:bold">1</div><div style="position:absolute;left:92.3px;top:80px;width:308.4px;height:1069px;background:#1e2030;"></div><span class="t" style="left:104.6px;top:85.1px;height:11px;line-height:11px;font-size:6.73px;color:#c6a0f6;letter-spacing:-0.057px;">EXPLORER</span><svg style="position:absolute;left:381.6px;top:86.4px;color:#c6a0f6" width="9" height="9"><use href="#dots"/></svg><svg style="position:absolute;left:93.6px;top:105px;color:#c6a0f6" width="9.4" height="9.4"><use href="#chev-d"/></svg><span class="t" style="left:104.6px;top:103.9px;height:11px;line-height:11px;font-size:7px;color:#cad3f5;font-weight:bold;letter-spacing:0.294px;">SNIP-SDK</span><svg style="position:absolute;left:336.4px;top:103.7px;color:#c6a0f6" width="10.4" height="10.4"><use href="#h-newfile"/></svg><svg style="position:absolute;left:351.1px;top:103.7px;color:#c6a0f6" width="10.4" height="10.4"><use href="#h-newfolder"/></svg><svg style="position:absolute;left:366.3px;top:103.7px;color:#c6a0f6" width="10.4" height="10.4"><use href="#h-refresh"/></svg><svg style="position:absolute;left:381.4px;top:103.7px;color:#c6a0f6" width="10.4" height="10.4"><use href="#h-collapse"/></svg><svg style="position:absolute;left:114.65px;top:129.1px;color:#c6a0f6" width="9.4" height="9.4"><use href="#chev-d"/></svg><svg style="position:absolute;left:125.65px;top:128.5px;" width="10.6" height="10.6"><use href="#fdo"/></svg><span class="t" style="left:140.55px;top:127px;height:14px;line-height:14px;font-size:8.7px;color:#eed49f;letter-spacing:-0.087px;">agents</span><div style="position:absolute;left:385.2px;top:131.7px;width:4.200px;height:4.200px;border-radius:50%;background:#7d735f"></div><div style="position:absolute;left:92.3px;top:116.3px;width:308.4px;height:14px;background:#1e2030;"></div><svg style="position:absolute;left:102px;top:118.6px;color:#c6a0f6" width="9.4" height="9.4"><use href="#chev-d"/></svg><svg style="position:absolute;left:113px;top:118px;" width="10.6" height="10.6"><use href="#fdo"/></svg><span class="t" style="left:127.9px;top:116px;height:14px;line-height:14px;font-size:8.7px;color:#eed49f;letter-spacing:-0.115px;">snip</span><div style="position:absolute;left:385.2px;top:121.2px;width:4.200px;height:4.200px;border-radius:50%;background:#7d735f"></div><svg style="position:absolute;left:114.65px;top:142.6px;color:#c6a0f6" width="9.4" height="9.4"><use href="#chev-d"/></svg><svg style="position:absolute;left:125.65px;top:142px;" width="10.6" height="10.6"><use href="#f-chat-o"/></svg><span class="t" style="left:140.55px;top:140px;height:14px;line-height:14px;font-size:8.7px;color:#eed49f;letter-spacing:0.05px;">chat</span><div style="position:absolute;left:385.2px;top:145.2px;width:4.200px;height:4.200px;border-radius:50%;background:#7d735f"></div><svg style="position:absolute;left:126.8px;top:156.57px;color:#c6a0f6" width="9.4" height="9.4"><use href="#chev-r"/></svg><svg style="position:absolute;left:138.6px;top:156.37px;" width="10.6" height="10.6"><use href="#fd"/></svg><span class="t" style="left:153.2px;top:154px;height:14px;line-height:14px;font-size:8.7px;color:#cad3f5;letter-spacing:-0.064px;">flows</span><svg style="position:absolute;left:138.6px;top:170.04px;" width="10.9" height="10.9"><use href="#go"/></svg><span class="t" style="left:153.2px;top:168px;height:14px;line-height:14px;font-size:8.7px;color:#cad3f5;letter-spacing:0.056px;">agent_config_test.go</span><svg style="position:absolute;left:138.6px;top:184.01px;" width="10.9" height="10.9"><use href="#go"/></svg><span class="t" style="left:153.2px;top:182px;height:14px;line-height:14px;font-size:8.7px;color:#cad3f5;letter-spacing:-0.013px;">agent.compressor.option.go</span><svg style="position:absolute;left:138.6px;top:197.98px;" width="10.9" height="10.9"><use href="#go"/></svg><span class="t" style="left:153.2px;top:196px;height:14px;line-height:14px;font-size:8.7px;color:#cad3f5;letter-spacing:-0.015px;">agent.options.go</span><svg style="position:absolute;left:138.6px;top:211.95px;" width="10.9" height="10.9"><use href="#go"/></svg><span class="t" style="left:153.2px;top:210px;height:14px;line-height:14px;font-size:8.7px;color:#cad3f5;letter-spacing:0.05px;">chat_agent_test.go</span><svg style="position:absolute;left:138.6px;top:225.92px;" width="10.9" height="10.9"><use href="#go"/></svg><span class="t" style="left:153.2px;top:224px;height:14px;line-height:14px;font-size:8.7px;color:#eed49f;letter-spacing:0.05px;">chat.agent.go</span><span class="t" style="left:384.2px;top:224.92px;height:12px;line-height:12px;font-size:7.8px;color:#d3be8f;">M</span><svg style="position:absolute;left:138.6px;top:239.89px;" width="10.9" height="10.9"><use href="#go"/></svg><span class="t" style="left:153.2px;top:238px;height:14px;line-height:14px;font-size:8.7px;color:#eed49f;letter-spacing:0.078px;">flow.chat-stream-with-memory.go</span><span class="t" style="left:384.2px;top:238.89px;height:12px;line-height:12px;font-size:7.8px;color:#d3be8f;">M</span><svg style="position:absolute;left:138.6px;top:253.86px;" width="10.9" height="10.9"><use href="#go"/></svg><span class="t" style="left:153.2px;top:252px;height:14px;line-height:14px;font-size:8.7px;color:#cad3f5;letter-spacing:0.015px;">flow.chat-stream.go</span><svg style="position:absolute;left:138.6px;top:267.83px;" width="10.9" height="10.9"><use href="#go"/></svg><span class="t" style="left:153.2px;top:266px;height:14px;line-height:14px;font-size:8.7px;color:#cad3f5;letter-spacing:0.062px;">flow.chat-with-memory.go</span><svg style="position:absolute;left:138.6px;top:281.8px;" width="10.9" height="10.9"><use href="#go"/></svg><span class="t" style="left:153.2px;top:280px;height:14px;line-height:14px;font-size:8.7px;color:#cad3f5;letter-spacing:0.05px;">flow.chat.go</span><svg style="position:absolute;left:138.6px;top:295.77px;" width="10.9" height="10.9"><use href="#go"/></svg><span class="t" style="left:153.2px;top:294px;height:14px;line-height:14px;font-size:8.7px;color:#cad3f5;letter-spacing:0.05px;">server_endpoints_test.go</span><svg style="position:absolute;left:138.6px;top:309.74px;" width="10.9" height="10.9"><use href="#go"/></svg><span class="t" style="left:153.2px;top:308px;height:14px;line-height:14px;font-size:8.7px;color:#cad3f5;letter-spacing:0.05px;">server.config.types.go</span><svg style="position:absolute;left:138.6px;top:323.71px;" width="10.9" height="10.9"><use href="#go"/></svg><span class="t" style="left:153.2px;top:322px;height:14px;line-height:14px;font-size:8.7px;color:#cad3f5;letter-spacing:0.05px;">server.options.go</span><svg style="position:absolute;left:114.65px;top:338.18px;color:#c6a0f6" width="9.4" height="9.4"><use href="#chev-d"/></svg><svg style="position:absolute;left:125.65px;top:337.58px;" width="10.6" height="10.6"><use href="#fdo"/></svg><span class="t" style="left:140.55px;top:336px;height:14px;line-height:14px;font-size:8.7px;color:#cad3f5;letter-spacing:0.05px;">compressor</span><svg style="position:absolute;left:126.8px;top:352.15px;color:#c6a0f6" width="9.4" height="9.4"><use href="#chev-r"/></svg><svg style="position:absolute;left:138.6px;top:351.95px;" width="10.6" height="10.6"><use href="#f-tasks"/></svg><span class="t" style="left:153.2px;top:350px;height:14px;line-height:14px;font-size:8.7px;color:#cad3f5;letter-spacing:0.05px;">tasks</span><svg style="position:absolute;left:138.6px;top:365.62px;" width="10.9" height="10.9"><use href="#go"/></svg><span class="t" style="left:153.2px;top:364px;height:14px;line-height:14px;font-size:8.7px;color:#cad3f5;letter-spacing:0.05px;">compressor_agent_test.go</span><svg style="position:absolute;left:138.6px;top:379.59px;" width="10.9" height="10.9"><use href="#go"/></svg><span class="t" style="left:153.2px;top:378px;height:14px;line-height:14px;font-size:8.7px;color:#cad3f5;letter-spacing:0.05px;">compressor.agent.go</span><svg style="position:absolute;left:114.15px;top:394.06px;color:#c6a0f6" width="9.4" height="9.4"><use href="#chev-r"/></svg><svg style="position:absolute;left:125.95px;top:393.86px;" width="10.6" height="10.6"><use href="#f-err"/></svg><span class="t" style="left:140.55px;top:392px;height:14px;line-height:14px;font-size:8.7px;color:#cad3f5;letter-spacing:0.05px;">errors</span><svg style="position:absolute;left:114.65px;top:408.03px;color:#c6a0f6" width="9.4" height="9.4"><use href="#chev-d"/></svg><svg style="position:absolute;left:125.65px;top:407.43px;" width="10.6" height="10.6"><use href="#f-models-o"/></svg><span class="t" style="left:140.55px;top:405px;height:14px;line-height:14px;font-size:8.7px;color:#cad3f5;letter-spacing:0.05px;">models</span><svg style="position:absolute;left:138.6px;top:421.5px;" width="10.9" height="10.9"><use href="#go"/></svg><span class="t" style="left:153.2px;top:419px;height:14px;line-height:14px;font-size:8.7px;color:#cad3f5;letter-spacing:0.05px;">model_config_test.go</span><svg style="position:absolute;left:138.6px;top:435.47px;" width="10.9" height="10.9"><use href="#go"/></svg><span class="t" style="left:153.2px;top:433px;height:14px;line-height:14px;font-size:8.7px;color:#cad3f5;letter-spacing:0.05px;">models.config.types.go</span><svg style="position:absolute;left:114.65px;top:449.94px;color:#c6a0f6" width="9.4" height="9.4"><use href="#chev-d"/></svg><svg style="position:absolute;left:125.65px;top:449.34px;" width="10.6" height="10.6"><use href="#fdo"/></svg><span class="t" style="left:140.55px;top:447px;height:14px;line-height:14px;font-size:8.7px;color:#cad3f5;letter-spacing:0.05px;">openai-helpers</span><svg style="position:absolute;left:138.6px;top:463.41px;" width="10.9" height="10.9"><use href="#go"/></svg><span class="t" style="left:153.2px;top:461px;height:14px;line-height:14px;font-size:8.7px;color:#cad3f5;letter-spacing:0.05px;">openai_helpers_test.go</span><svg style="position:absolute;left:138.6px;top:477.38px;" width="10.9" height="10.9"><use href="#go"/></svg><span class="t" style="left:153.2px;top:475px;height:14px;line-height:14px;font-size:8.7px;color:#cad3f5;letter-spacing:0.05px;">openai.helpers.go</span><svg style="position:absolute;left:114.65px;top:491.85px;color:#c6a0f6" width="9.4" height="9.4"><use href="#chev-d"/></svg><svg style="position:absolute;left:125.65px;top:491.25px;" width="10.6" height="10.6"><use href="#fdo"/></svg><span class="t" style="left:140.55px;top:489px;height:14px;line-height:14px;font-size:8.7px;color:#eed49f;letter-spacing:0.05px;">rag</span><div style="position:absolute;left:385.2px;top:494.45px;width:4.200px;height:4.200px;border-radius:50%;background:#7d735f"></div><svg style="position:absolute;left:126.8px;top:505.82px;color:#c6a0f6" width="9.4" height="9.4"><use href="#chev-r"/></svg><svg style="position:absolute;left:138.6px;top:505.62px;" width="10.6" height="10.6"><use href="#f-tasks"/></svg><span class="t" style="left:153.2px;top:503px;height:14px;line-height:14px;font-size:8.7px;color:#a6da95;letter-spacing:0.05px;">tasks</span><div style="position:absolute;left:385.2px;top:508.42px;width:4.200px;height:4.200px;border-radius:50%;background:#5d7559"></div><svg style="position:absolute;left:126.8px;top:519.79px;color:#c6a0f6" width="9.4" height="9.4"><use href="#chev-r"/></svg><svg style="position:absolute;left:138.6px;top:519.59px;" width="10.6" height="10.6"><use href="#fd"/></svg><span class="t" style="left:153.2px;top:517px;height:14px;line-height:14px;font-size:8.7px;color:#cad3f5;letter-spacing:0.137px;">test-data-chunks</span><svg style="position:absolute;left:126.8px;top:533.76px;color:#c6a0f6" width="9.4" height="9.4"><use href="#chev-r"/></svg><svg style="position:absolute;left:138.6px;top:533.56px;" width="10.6" height="10.6"><use href="#fd"/></svg><span class="t" style="left:153.2px;top:531px;height:14px;line-height:14px;font-size:8.7px;color:#cad3f5;letter-spacing:0.149px;">test-data-integration</span><svg style="position:absolute;left:126.8px;top:547.73px;color:#c6a0f6" width="9.4" height="9.4"><use href="#chev-r"/></svg><svg style="position:absolute;left:138.6px;top:547.53px;" width="10.6" height="10.6"><use href="#fd"/></svg><span class="t" style="left:153.2px;top:545px;height:14px;line-height:14px;font-size:8.7px;color:#cad3f5;letter-spacing:0.121px;">test-data-search</span><svg style="position:absolute;left:138.6px;top:561.2px;" width="10.9" height="10.9"><use href="#go"/></svg><span class="t" style="left:153.2px;top:559px;height:14px;line-height:14px;font-size:8.7px;color:#eed49f;letter-spacing:0.05px;">rag_agent_test.go</span><span class="t" style="left:384.2px;top:560.2px;height:12px;line-height:12px;font-size:7.8px;color:#d3be8f;">M</span><svg style="position:absolute;left:138.6px;top:575.17px;" width="10.9" height="10.9"><use href="#go"/></svg><span class="t" style="left:153.2px;top:573px;height:14px;line-height:14px;font-size:8.7px;color:#eed49f;letter-spacing:0.05px;">rag.agent.go</span><span class="t" style="left:384.2px;top:574.17px;height:12px;line-height:12px;font-size:7.8px;color:#d3be8f;">M</span><svg style="position:absolute;left:138.6px;top:589.14px;" width="10.9" height="10.9"><use href="#go"/></svg><span class="t" style="left:153.2px;top:587px;height:14px;line-height:14px;font-size:8.7px;color:#cad3f5;letter-spacing:0.05px;">rag.agent.options.go</span><svg style="position:absolute;left:138.6px;top:603.11px;" width="10.9" height="10.9"><use href="#go"/></svg><span class="t" style="left:153.2px;top:601px;height:14px;line-height:14px;font-size:8.7px;color:#a6da95;letter-spacing:0.05px;">rag.chunk.go</span><span class="t" style="left:384.6px;top:602.11px;height:12px;line-height:12px;font-size:7.8px;color:#95c486;">U</span><svg style="position:absolute;left:138.6px;top:617.08px;" width="10.9" height="10.9"><use href="#go"/></svg><span class="t" style="left:153.2px;top:615px;height:14px;line-height:14px;font-size:8.7px;color:#cad3f5;letter-spacing:0.05px;">rag.store.config.go</span><svg style="position:absolute;left:114.65px;top:631.55px;color:#c6a0f6" width="9.4" height="9.4"><use href="#chev-d"/></svg><svg style="position:absolute;left:125.65px;top:630.95px;" width="10.6" height="10.6"><use href="#f-remote-o"/></svg><span class="t" style="left:140.55px;top:629px;height:14px;line-height:14px;font-size:8.7px;color:#eed49f;letter-spacing:0.05px;">remote</span><div style="position:absolute;left:385.2px;top:634.15px;width:4.200px;height:4.200px;border-radius:50%;background:#7d735f"></div><svg style="position:absolute;left:138.6px;top:645.02px;" width="10.9" height="10.9"><use href="#go"/></svg><span class="t" style="left:153.2px;top:643px;height:14px;line-height:14px;font-size:8.7px;color:#cad3f5;letter-spacing:0.05px;">remote_agent_test.go</span><svg style="position:absolute;left:138.6px;top:658.99px;" width="10.9" height="10.9"><use href="#go"/></svg><span class="t" style="left:153.2px;top:657px;height:14px;line-height:14px;font-size:8.7px;color:#eed49f;letter-spacing:0.05px;">remote.agent.go</span><span class="t" style="left:384.2px;top:657.99px;height:12px;line-height:12px;font-size:7.8px;color:#d3be8f;">M</span><svg style="position:absolute;left:114.15px;top:673.46px;color:#c6a0f6" width="9.4" height="9.4"><use href="#chev-r"/></svg><svg style="position:absolute;left:125.95px;top:673.26px;" width="10.6" height="10.6"><use href="#f-tasks"/></svg><span class="t" style="left:140.55px;top:671px;height:14px;line-height:14px;font-size:8.7px;color:#cad3f5;letter-spacing:0.05px;">tasks</span><svg style="position:absolute;left:114.65px;top:687.43px;color:#c6a0f6" width="9.4" height="9.4"><use href="#chev-d"/></svg><svg style="position:absolute;left:125.65px;top:686.83px;" width="10.6" height="10.6"><use href="#fdo"/></svg><span class="t" style="left:140.55px;top:685px;height:14px;line-height:14px;font-size:8.7px;color:#a6da95;letter-spacing:0.05px;">text</span><div style="position:absolute;left:385.2px;top:690.03px;width:4.200px;height:4.200px;border-radius:50%;background:#5d7559"></div><svg style="position:absolute;left:138.6px;top:700.9px;" width="10.9" height="10.9"><use href="#go"/></svg><span class="t" style="left:153.2px;top:699px;height:14px;line-height:14px;font-size:8.7px;color:#a6da95;letter-spacing:0.05px;">text.chunk.go</span><span class="t" style="left:384.6px;top:699.9px;height:12px;line-height:12px;font-size:7.8px;color:#95c486;">U</span><div style="position:absolute;left:92.3px;top:713.07px;width:308.4px;height:14px;background:#363a4f;"></div><svg style="position:absolute;left:114.65px;top:715.37px;color:#cad3f5" width="9.4" height="9.4"><use href="#chev-d"/></svg><svg style="position:absolute;left:125.65px;top:714.77px;" width="10.6" height="10.6"><use href="#f-tools-o"/></svg><span class="t" style="left:140.55px;top:713px;height:14px;line-height:14px;font-size:8.7px;color:#cad3f5;letter-spacing:0.05px;">toolbox</span><svg style="position:absolute;left:126.8px;top:729.34px;color:#c6a0f6" width="9.4" height="9.4"><use href="#chev-r"/></svg><svg style="position:absolute;left:138.6px;top:729.14px;" width="10.6" height="10.6"><use href="#fd"/></svg><span class="t" style="left:153.2px;top:727px;height:14px;line-height:14px;font-size:8.7px;color:#cad3f5;letter-spacing:0.05px;">conversion</span><svg style="position:absolute;left:126.8px;top:743.31px;color:#c6a0f6" width="9.4" height="9.4"><use href="#chev-r"/></svg><svg style="position:absolute;left:138.6px;top:743.11px;" width="10.6" height="10.6"><use href="#f-env"/></svg><span class="t" style="left:153.2px;top:741px;height:14px;line-height:14px;font-size:8.7px;color:#cad3f5;letter-spacing:0.05px;">env</span><svg style="position:absolute;left:126.8px;top:757.28px;color:#c6a0f6" width="9.4" height="9.4"><use href="#chev-r"/></svg><svg style="position:absolute;left:138.6px;top:757.08px;" width="10.6" height="10.6"><use href="#fd"/></svg><span class="t" style="left:153.2px;top:755px;height:14px;line-height:14px;font-size:8.7px;color:#cad3f5;letter-spacing:0.05px;">files</span><svg style="position:absolute;left:126.8px;top:771.25px;color:#c6a0f6" width="9.4" height="9.4"><use href="#chev-r"/></svg><svg style="position:absolute;left:138.6px;top:771.05px;" width="10.6" height="10.6"><use href="#fd"/></svg><span class="t" style="left:153.2px;top:769px;height:14px;line-height:14px;font-size:8.7px;color:#cad3f5;letter-spacing:0.05px;">logger</span><svg style="position:absolute;left:114.65px;top:785.22px;color:#c6a0f6" width="9.4" height="9.4"><use href="#chev-d"/></svg><svg style="position:absolute;left:125.65px;top:784.62px;" width="10.6" height="10.6"><use href="#f-tools-o"/></svg><span class="t" style="left:140.55px;top:783px;height:14px;line-height:14px;font-size:8.7px;color:#a6da95;letter-spacing:0.05px;">tools</span><div style="position:absolute;left:385.2px;top:787.82px;width:4.200px;height:4.200px;border-radius:50%;background:#5d7559"></div><svg style="position:absolute;left:127.3px;top:799.19px;color:#c6a0f6" width="9.4" height="9.4"><use href="#chev-d"/></svg><svg style="position:absolute;left:138.3px;top:798.59px;" width="10.6" height="10.6"><use href="#f-tasks-o"/></svg><span class="t" style="left:153.2px;top:797px;height:14px;line-height:14px;font-size:8.7px;color:#a6da95;letter-spacing:0.05px;">tasks</span><div style="position:absolute;left:385.2px;top:801.79px;width:4.200px;height:4.200px;border-radius:50%;background:#5d7559"></div><svg style="position:absolute;left:152.05px;top:812.96px;" width="9.8" height="9.8"><use href="#todo"/></svg><span class="t" style="left:165.85px;top:811px;height:14px;line-height:14px;font-size:8.7px;color:#a6da95;letter-spacing:0.022px;">implement.yolo.tool.call.todo</span><span class="t" style="left:384.6px;top:811.66px;height:12px;line-height:12px;font-size:7.8px;color:#95c486;">U</span><svg style="position:absolute;left:152.35px;top:826.93px;" width="9.6" height="9.8"><use href="#doc"/></svg><span class="t" style="left:165.85px;top:825px;height:14px;line-height:14px;font-size:8.7px;color:#a6da95;letter-spacing:-0.014px;">should.I.add.server.methods.question</span><span class="t" style="left:384.6px;top:825.63px;height:12px;line-height:12px;font-size:7.8px;color:#95c486;">U</span><svg style="position:absolute;left:138.6px;top:840.6px;" width="10.9" height="10.9"><use href="#go"/></svg><span class="t" style="left:153.2px;top:839px;height:14px;line-height:14px;font-size:8.7px;color:#a6da95;letter-spacing:0.05px;">flow.too.call.go</span><span class="t" style="left:384.6px;top:839.6px;height:12px;line-height:12px;font-size:7.8px;color:#95c486;">U</span><svg style="position:absolute;left:138.6px;top:854.57px;" width="10.9" height="10.9"><use href="#go"/></svg><span class="t" style="left:153.2px;top:853px;height:14px;line-height:14px;font-size:8.7px;color:#a6da95;letter-spacing:0.05px;">flow.yolo.tool.call.go</span><span class="t" style="left:384.6px;top:853.57px;height:12px;line-height:12px;font-size:7.8px;color:#95c486;">U</span><svg style="position:absolute;left:138.6px;top:868.54px;" width="10.9" height="10.9"><use href="#go"/></svg><span class="t" style="left:153.2px;top:866px;height:14px;line-height:14px;font-size:8.7px;color:#a6da95;letter-spacing:0.05px;">tools.agent.go</span><span class="t" style="left:384.6px;top:867.54px;height:12px;line-height:12px;font-size:7.8px;color:#95c486;">U</span><svg style="position:absolute;left:138.6px;top:882.51px;" width="10.9" height="10.9"><use href="#go"/></svg><span class="t" style="left:153.2px;top:880px;height:14px;line-height:14px;font-size:8.7px;color:#a6da95;letter-spacing:0.05px;">tools.agent.options.go</span><span class="t" style="left:384.6px;top:881.51px;height:12px;line-height:12px;font-size:7.8px;color:#95c486;">U</span><svg style="position:absolute;left:138.6px;top:896.48px;" width="10.9" height="10.9"><use href="#go"/></svg><span class="t" style="left:153.2px;top:894px;height:14px;line-height:14px;font-size:8.7px;color:#a6da95;letter-spacing:0.05px;">tools.helpers.go</span><span class="t" style="left:384.6px;top:895.48px;height:12px;line-height:12px;font-size:7.8px;color:#95c486;">U</span><svg style="position:absolute;left:138.6px;top:910.45px;" width="10.9" height="10.9"><use href="#go"/></svg><span class="t" style="left:153.2px;top:908px;height:14px;line-height:14px;font-size:8.7px;color:#a6da95;letter-spacing:0.05px;">tools.types.go</span><span class="t" style="left:384.6px;top:909.45px;height:12px;line-height:12px;font-size:7.8px;color:#95c486;">U</span><svg style="position:absolute;left:114.65px;top:924.92px;color:#c6a0f6" width="9.4" height="9.4"><use href="#chev-d"/></svg><svg style="position:absolute;left:125.65px;top:924.32px;" width="10.6" height="10.6"><use href="#f-ui-o"/></svg><span class="t" style="left:140.55px;top:922px;height:14px;line-height:14px;font-size:8.7px;color:#a6da95;letter-spacing:0.05px;">ui</span><div style="position:absolute;left:385.2px;top:927.52px;width:4.200px;height:4.200px;border-radius:50%;background:#5d7559"></div><svg style="position:absolute;left:126.8px;top:938.89px;color:#c6a0f6" width="9.4" height="9.4"><use href="#chev-r"/></svg><svg style="position:absolute;left:138.6px;top:938.69px;" width="10.6" height="10.6"><use href="#f-prompt"/></svg><span class="t" style="left:153.2px;top:936px;height:14px;line-height:14px;font-size:8.7px;color:#cad3f5;letter-spacing:0.05px;">prompt</span><svg style="position:absolute;left:127.3px;top:952.86px;color:#c6a0f6" width="9.4" height="9.4"><use href="#chev-d"/></svg><svg style="position:absolute;left:138.3px;top:952.26px;" width="10.6" height="10.6"><use href="#fdo"/></svg><span class="t" style="left:153.2px;top:950px;height:14px;line-height:14px;font-size:8.7px;color:#a6da95;letter-spacing:0.05px;">spinner</span><div style="position:absolute;left:385.2px;top:955.46px;width:4.200px;height:4.200px;border-radius:50%;background:#5d7559"></div><svg style="position:absolute;left:151.25px;top:966.33px;" width="10.9" height="10.9"><use href="#go"/></svg><span class="t" style="left:165.85px;top:964px;height:14px;line-height:14px;font-size:8.7px;color:#a6da95;letter-spacing:0.05px;">color.spinner.go</span><span class="t" style="left:384.6px;top:965.33px;height:12px;line-height:12px;font-size:7.8px;color:#95c486;">U</span><svg style="position:absolute;left:151.25px;top:980.3px;" width="10.9" height="10.9"><use href="#go"/></svg><span class="t" style="left:165.85px;top:978px;height:14px;line-height:14px;font-size:8.7px;color:#cad3f5;letter-spacing:0.05px;">spinner.go</span><svg style="position:absolute;left:125.95px;top:994.27px;" width="10.9" height="10.9"><use href="#go"/></svg><span class="t" style="left:140.55px;top:992px;height:14px;line-height:14px;font-size:8.7px;color:#cad3f5;letter-spacing:0.05px;">agent.interface.go</span><svg style="position:absolute;left:125.95px;top:1008.24px;" width="10.9" height="10.9"><use href="#go"/></svg><span class="t" style="left:140.55px;top:1006px;height:14px;line-height:14px;font-size:8.7px;color:#cad3f5;letter-spacing:0px;">compressor.agent.interface.go</span><svg style="position:absolute;left:125.95px;top:1022.21px;" width="10.9" height="10.9"><use href="#go"/></svg><span class="t" style="left:140.55px;top:1020px;height:14px;line-height:14px;font-size:8.7px;color:#eed49f;letter-spacing:0.05px;">rag.agent.interface.go</span><span class="t" style="left:384.2px;top:1021.21px;height:12px;line-height:12px;font-size:7.8px;color:#d3be8f;">M</span><svg style="position:absolute;left:126.75px;top:1036.48px;" width="9.8" height="9.8"><use href="#todo"/></svg><span class="t" style="left:140.55px;top:1034px;height:14px;line-height:14px;font-size:8.7px;color:#cad3f5;letter-spacing:0.05px;">simple.agent.todo</span><svg style="position:absolute;left:125.95px;top:1050.15px;" width="10.9" height="10.9"><use href="#go"/></svg><span class="t" style="left:140.55px;top:1048px;height:14px;line-height:14px;font-size:8.7px;color:#a6da95;letter-spacing:0.05px;">tools.agent.interface.go</span><span class="t" style="left:384.6px;top:1049.15px;height:12px;line-height:12px;font-size:7.8px;color:#95c486;">U</span><svg style="position:absolute;left:101.5px;top:1064.62px;color:#c6a0f6" width="9.4" height="9.4"><use href="#chev-r"/></svg><svg style="position:absolute;left:113.3px;top:1064.42px;" width="10.6" height="10.6"><use href="#f-tasks"/></svg><span class="t" style="left:127.9px;top:1062px;height:14px;line-height:14px;font-size:8.7px;color:#a6da95;letter-spacing:0.05px;">tasks</span><div style="position:absolute;left:385.2px;top:1067.22px;width:4.200px;height:4.200px;border-radius:50%;background:#5d7559"></div><svg style="position:absolute;left:101.5px;top:1078.59px;color:#c6a0f6" width="9.4" height="9.4"><use href="#chev-r"/></svg><svg style="position:absolute;left:113.3px;top:1078.39px;" width="10.6" height="10.6"><use href="#f-tmp"/></svg><span class="t" style="left:127.9px;top:1076px;height:14px;line-height:14px;font-size:8.7px;color:#6e738d;letter-spacing:0.05px;">tmp</span><div style="position:absolute;left:92.300px;top:140.200px;width:309px;height:3px;background:linear-gradient(rgba(0,0,0,.28),rgba(0,0,0,0))"></div><svg style="position:absolute;left:93.6px;top:1095.3px;color:#c6a0f6" width="9.4" height="9.4"><use href="#chev-r"/></svg><span class="t" style="left:104.6px;top:1094.4px;height:11px;line-height:11px;font-size:7px;color:#cad3f5;font-weight:bold;letter-spacing:0.04px;">OUTLINE</span><svg style="position:absolute;left:93.6px;top:1108.9px;color:#c6a0f6" width="9.4" height="9.4"><use href="#chev-r"/></svg><span class="t" style="left:104.6px;top:1108px;height:11px;line-height:11px;font-size:7px;color:#cad3f5;font-weight:bold;letter-spacing:0.042px;">TIMELINE</span><svg style="position:absolute;left:93.6px;top:1123.1px;color:#c6a0f6" width="9.4" height="9.4"><use href="#chev-r"/></svg><span class="t" style="left:104.6px;top:1122.2px;height:11px;line-height:11px;font-size:6.7px;color:#cad3f5;font-weight:bold;letter-spacing:-0.061px;">GO</span><svg style="position:absolute;left:93.6px;top:1136.8px;color:#c6a0f6" width="9.4" height="9.4"><use href="#chev-r"/></svg><span class="t" style="left:104.6px;top:1135.9px;height:11px;line-height:11px;font-size:7px;color:#cad3f5;font-weight:bold;letter-spacing:-0.031px;">PACKAGE OUTLINE</span><div style="position:absolute;left:400.7px;top:80px;width:1538px;height:22.3px;background:#181926;"></div><div style="position:absolute;left:567.5px;top:80px;width:1297.7px;height:22.3px;background:#1e2030;"></div><div style="position:absolute;left:401.8px;top:80px;width:165.7px;height:22.3px;background:#24273a;"></div><div style="position:absolute;left:401.8px;top:80px;width:165.7px;height:1px;background:#c6a0f6;"></div><svg style="position:absolute;left:407.4px;top:85.9px;" width="10.9" height="10.9"><use href="#go"/></svg><span class="t" style="left:421.7px;top:84.3px;height:14px;line-height:14px;font-size:8.7px;color:#eed49f;letter-spacing:-0.05px;">main.go</span><span class="t" style="left:456.8px;top:85.6px;height:12px;line-height:12px;font-size:7.4px;color:#a8987a;letter-spacing:0.193px;">.../11-compressor-agent</span><span class="t" style="left:542.8px;top:84.9px;height:13px;line-height:13px;font-size:7.9px;color:#b5a47f;">M</span><svg style="position:absolute;left:554.6px;top:87.2px;color:#b7bdf8" width="8.2" height="8.2"><use href="#x"/></svg><svg style="position:absolute;left:575px;top:85.9px;" width="10.9" height="10.9"><use href="#go"/></svg><span class="t" style="left:588px;top:84.3px;height:14px;line-height:14px;font-size:8.7px;color:#a6da95;letter-spacing:0.016px;">flow.too.call.go</span><span class="t" style="left:649.7px;top:84.9px;height:13px;line-height:13px;font-size:7.9px;color:#86ad7c;">U</span><svg style="position:absolute;left:680px;top:86.4px;" width="9.8" height="9.8"><use href="#info"/></svg><span class="t" style="left:693.3px;top:85.3px;height:14px;line-height:14px;font-size:8.12px;color:#eed49f;letter-spacing:-0.064px;">README.md</span><span class="t" style="left:744.7px;top:84.9px;height:13px;line-height:13px;font-size:7.9px;color:#b5a47f;">M</span><svg style="position:absolute;left:776.5px;top:85.9px;" width="10.9" height="10.9"><use href="#go"/></svg><span class="t" style="left:790px;top:84.3px;height:14px;line-height:14px;font-size:8.7px;color:#a6da95;letter-spacing:-0.039px;">flow.yolo.tool.call.go</span><span class="t" style="left:870.7px;top:84.9px;height:13px;line-height:13px;font-size:7.9px;color:#86ad7c;">U</span><svg style="position:absolute;left:901px;top:85.9px;" width="10.9" height="10.9"><use href="#go"/></svg><span class="t" style="left:915px;top:84.3px;height:14px;line-height:14px;font-size:8.7px;color:#a6da95;letter-spacing:0.03px;">tools.agent.options.go</span><span class="t" style="left:1004.7px;top:84.9px;height:13px;line-height:13px;font-size:7.9px;color:#86ad7c;">U</span><svg style="position:absolute;left:1035.2px;top:86.4px;" width="9.2" height="9.8"><use href="#doc"/></svg><span class="t" style="left:1048.3px;top:84.3px;height:14px;line-height:14px;font-size:8.7px;color:#a6da95;letter-spacing:-0.011px;">should.I.add.server.methods.question</span><span class="t" style="left:1196.7px;top:84.9px;height:13px;line-height:13px;font-size:7.9px;color:#86ad7c;">U</span><svg style="position:absolute;left:1227px;top:86.4px;" width="9.8" height="9.8"><use href="#todo"/></svg><span class="t" style="left:1240.5px;top:84.3px;height:14px;line-height:14px;font-size:8.7px;color:#a6da95;letter-spacing:-0.004px;">add.other.compression.methods.todo</span><span class="t" style="left:1388.1px;top:84.9px;height:13px;line-height:13px;font-size:7.9px;color:#86ad7c;">U</span><svg style="position:absolute;left:1417.8px;top:85.9px;" width="10.9" height="10.9"><use href="#go"/></svg><span class="t" style="left:1432.4px;top:84.3px;height:14px;line-height:14px;font-size:8.7px;color:#a6da95;letter-spacing:0.036px;">tools.agent.interface.go</span><span class="t" style="left:1527.3px;top:84.9px;height:13px;line-height:13px;font-size:7.9px;color:#86ad7c;">U</span><svg style="position:absolute;left:1557.2px;top:85.9px;" width="10.9" height="10.9"><use href="#go"/></svg><span class="t" style="left:1571.4px;top:84.3px;height:14px;line-height:14px;font-size:8.7px;color:#6e738d;letter-spacing:0.031px;">agent.interface.go</span><svg style="position:absolute;left:1666px;top:85.9px;" width="10.9" height="10.9"><use href="#go"/></svg><span class="t" style="left:1680.8px;top:84.3px;height:14px;line-height:14px;font-size:8.7px;color:#eed49f;letter-spacing:0.016px;">rag.agent.interface.go</span><span class="t" style="left:1769.5px;top:84.9px;height:13px;line-height:13px;font-size:7.9px;color:#b5a47f;">M</span><svg style="position:absolute;left:1801px;top:85.9px;" width="10.9" height="10.9"><use href="#go"/></svg><span class="t" style="left:1814.4px;top:84.3px;height:14px;line-height:14px;font-size:8.7px;color:#a6da95;letter-spacing:-0.025px;">rag.chunk.go</span><div style="position:absolute;left:1865.2px;top:80px;width:73.5px;height:22.3px;background:#181926;"></div><svg style="position:absolute;left:1868.8px;top:85.5px;" width="11.6" height="11.6"><use href="#spark"/></svg><svg style="position:absolute;left:1885.4px;top:86.3px;color:#c6a0f6" width="10" height="10"><use href="#t-compare"/></svg><svg style="position:absolute;left:1902.6px;top:86.3px;color:#c6a0f6" width="10" height="10"><use href="#t-split"/></svg><svg style="position:absolute;left:1919.6px;top:86.9px;color:#8087a2" width="8.8" height="8.8"><use href="#dots"/></svg><div style="position:absolute;left:400.7px;top:102.3px;width:1538px;height:14px;background:#24273a;"></div><span class="t" style="left:411.5px;top:102.7px;height:14px;line-height:14px;font-size:8.5px;color:#b3bbdb;letter-spacing:-0.022px;">samples</span><svg style="position:absolute;left:443.6px;top:105.5px;color:#a5adcb" width="8.4" height="8.4"><use href="#chev-r"/></svg><span class="t" style="left:453.8px;top:102.7px;height:14px;line-height:14px;font-size:8.5px;color:#b3bbdb;letter-spacing:0.074px;">11-compressor-agent</span><svg style="position:absolute;left:536.8px;top:105.5px;color:#a5adcb" width="8.4" height="8.4"><use href="#chev-r"/></svg><svg style="position:absolute;left:546px;top:104.5px;" width="10.6" height="10.6"><use href="#go"/></svg><span class="t" style="left:559.7px;top:102.7px;height:14px;line-height:14px;font-size:8.5px;color:#b3bbdb;letter-spacing:0.009px;">main.go</span><svg style="position:absolute;left:590.8px;top:105.5px;color:#a5adcb" width="8.4" height="8.4"><use href="#chev-r"/></svg><svg style="position:absolute;left:600.6px;top:104.9px;color:#8aadf4" width="9.6" height="9.6"><use href="#sym-method"/></svg><span class="t" style="left:612.8px;top:102.7px;height:14px;line-height:14px;font-size:8.5px;color:#b3bbdb;letter-spacing:-0.031px;">main</span><div style="position:absolute;left:400.700px;top:116px;width:1464.500px;height:828.500px;overflow:hidden"><div style="position:absolute;left:-400.700px;top:-116px;width:2000px;height:1244px"><div style="position:absolute;left:445.8px;top:325.055px;width:1427px;height:12.7px;background:#2f3247;"></div><div style="position:absolute;left:445px;top:129px;width:1px;height:816px;background:#50546b;"></div><div style="position:absolute;left:465px;top:122.019px;width:1px;height:88.809px;background:#33374c;"></div><div style="position:absolute;left:485px;top:160.081px;width:1px;height:12.687px;background:#33374c;"></div><div style="position:absolute;left:485px;top:185.454px;width:1px;height:12.687px;background:#33374c;"></div><div style="position:absolute;left:465px;top:388.446px;width:1px;height:38.061px;background:#33374c;"></div><div style="position:absolute;left:485px;top:401.133px;width:1px;height:12.687px;background:#33374c;"></div><div style="position:absolute;left:465px;top:692.935px;width:1px;height:164.931px;background:#33374c;"></div><div style="position:absolute;left:485px;top:743.683px;width:1px;height:12.687px;background:#33374c;"></div><div style="position:absolute;left:485px;top:807.118px;width:1px;height:25.374px;background:#33374c;"></div><div style="position:absolute;left:465px;top:883.24px;width:1px;height:12.687px;background:#33374c;"></div><div style="position:absolute;left:431.8px;top:299.637px;width:2.2px;height:50.748px;background:#a6da95;"></div><div style="position:absolute;left:431.8px;top:388.446px;width:2.2px;height:38.061px;background:#a6da95;"></div><div style="position:absolute;left:431.8px;top:667.561px;width:2.2px;height:12.687px;background:#a6da95;"></div><div style="position:absolute;left:433px;top:692.935px;width:1px;height:152.244px;opacity:.8;background:repeating-linear-gradient(#b9a981 0,#b9a981 1px,transparent 1px,transparent 2px)"></div><span class="t" style="right:1571.6px;top:123px;height:13px;line-height:13px;font-size:8.274px;color:#7d839f;font-family:'Liberation Mono',monospace;-webkit-text-stroke:0.15px currentColor;">65</span><span class="c" style="left:465.26px;top:123px;color:#c6a0f6;">for</span><span class="c" style="left:485.12px;top:123px;color:#cad3f5;">i</span><span class="c" style="left:490.085px;top:123px;color:#939ab7;">,</span><span class="c" style="left:500.015px;top:123px;color:#cad3f5;">msg</span><span class="c" style="left:519.875px;top:123px;color:#8bd5ca;">:=</span><span class="c" style="left:534.77px;top:123px;color:#c6a0f6;">range</span><span class="c" style="left:564.56px;top:123px;color:#cad3f5;">messages</span><span class="c" style="left:609.245px;top:123px;color:#f5a97f;">{</span><span class="t" style="right:1571.6px;top:136px;height:13px;line-height:13px;font-size:8.274px;color:#7d839f;font-family:'Liberation Mono',monospace;-webkit-text-stroke:0.15px currentColor;">66</span><span class="c" style="left:485.12px;top:136px;color:#cad3f5;">text</span><span class="c" style="left:509.945px;top:136px;color:#8bd5ca;">:=</span><span class="c" style="left:524.84px;top:136px;color:#cad3f5;">msg</span><span class="c" style="left:539.735px;top:136px;color:#939ab7;">.</span><span class="c" style="left:544.7px;top:136px;color:#cad3f5;">Content</span><span class="c" style="left:579.455px;top:136px;color:#eed49f;">[</span><span class="c" style="left:584.42px;top:136px;color:#f5a97f;">0</span><span class="c" style="left:589.385px;top:136px;color:#eed49f;">]</span><span class="c" style="left:594.35px;top:136px;color:#939ab7;">.</span><span class="c" style="left:599.315px;top:136px;color:#cad3f5;">Text</span><span class="t" style="right:1571.6px;top:148px;height:13px;line-height:13px;font-size:8.274px;color:#7d839f;font-family:'Liberation Mono',monospace;-webkit-text-stroke:0.15px currentColor;">67</span><span class="c" style="left:485.12px;top:148px;color:#c6a0f6;">if</span><span class="c" style="left:500.015px;top:148px;color:#8aadf4;font-style:italic;">len</span><span class="c" style="left:514.91px;top:148px;color:#eed49f;">(</span><span class="c" style="left:519.875px;top:148px;color:#cad3f5;">text</span><span class="c" style="left:539.735px;top:148px;color:#eed49f;">)</span><span class="c" style="left:549.665px;top:148px;color:#8bd5ca;">&gt;</span><span class="c" style="left:559.595px;top:148px;color:#f5a97f;">100</span><span class="c" style="left:579.455px;top:148px;color:#eed49f;">{</span><span class="t" style="right:1571.6px;top:161px;height:13px;line-height:13px;font-size:8.274px;color:#7d839f;font-family:'Liberation Mono',monospace;-webkit-text-stroke:0.15px currentColor;">68</span><span class="c" style="left:504.98px;top:161px;color:#eed49f;">fmt</span><span class="c" style="left:519.875px;top:161px;color:#939ab7;">.</span><span class="c" style="left:524.84px;top:161px;color:#8aadf4;font-style:italic;">Printf</span><span class="c" style="left:554.63px;top:161px;color:#a6da95;">(</span><span class="c" style="left:559.595px;top:161px;color:#a6da95;">"%d. [%s]: %s...\n"</span><span class="c" style="left:653.93px;top:161px;color:#939ab7;">,</span><span class="c" style="left:663.86px;top:161px;color:#cad3f5;">i</span><span class="c" style="left:668.825px;top:161px;color:#8bd5ca;">+</span><span class="c" style="left:673.79px;top:161px;color:#f5a97f;">1</span><span class="c" style="left:678.755px;top:161px;color:#939ab7;">,</span><span class="c" style="left:688.685px;top:161px;color:#cad3f5;">msg</span><span class="c" style="left:703.58px;top:161px;color:#939ab7;">.</span><span class="c" style="left:708.545px;top:161px;color:#cad3f5;">Role</span><span class="c" style="left:728.405px;top:161px;color:#939ab7;">,</span><span class="c" style="left:738.335px;top:161px;color:#cad3f5;">text</span><span class="c" style="left:758.195px;top:161px;color:#7dc4e4;">[</span><span class="c" style="left:763.16px;top:161px;color:#939ab7;">:</span><span class="c" style="left:768.125px;top:161px;color:#f5a97f;">100</span><span class="c" style="left:783.02px;top:161px;color:#7dc4e4;">]</span><span class="c" style="left:787.985px;top:161px;color:#a6da95;">)</span><span class="t" style="right:1571.6px;top:174px;height:13px;line-height:13px;font-size:8.274px;color:#7d839f;font-family:'Liberation Mono',monospace;-webkit-text-stroke:0.15px currentColor;">69</span><span class="c" style="left:485.12px;top:174px;color:#eed49f;">}</span><span class="c" style="left:495.05px;top:174px;color:#c6a0f6;">else</span><span class="c" style="left:519.875px;top:174px;color:#eed49f;">{</span><span class="t" style="right:1571.6px;top:187px;height:13px;line-height:13px;font-size:8.274px;color:#7d839f;font-family:'Liberation Mono',monospace;-webkit-text-stroke:0.15px currentColor;">70</span><span class="c" style="left:504.98px;top:187px;color:#eed49f;">fmt</span><span class="c" style="left:519.875px;top:187px;color:#939ab7;">.</span><span class="c" style="left:524.84px;top:187px;color:#8aadf4;font-style:italic;">Printf</span><span class="c" style="left:554.63px;top:187px;color:#a6da95;">(</span><span class="c" style="left:559.595px;top:187px;color:#a6da95;">"%d. [%s]: %s\n"</span><span class="c" style="left:639.035px;top:187px;color:#939ab7;">,</span><span class="c" style="left:648.965px;top:187px;color:#cad3f5;">i</span><span class="c" style="left:653.93px;top:187px;color:#8bd5ca;">+</span><span class="c" style="left:658.895px;top:187px;color:#f5a97f;">1</span><span class="c" style="left:663.86px;top:187px;color:#939ab7;">,</span><span class="c" style="left:673.79px;top:187px;color:#cad3f5;">msg</span><span class="c" style="left:688.685px;top:187px;color:#939ab7;">.</span><span class="c" style="left:693.65px;top:187px;color:#cad3f5;">Role</span><span class="c" style="left:713.51px;top:187px;color:#939ab7;">,</span><span class="c" style="left:723.44px;top:187px;color:#cad3f5;">text</span><span class="c" style="left:743.3px;top:187px;color:#a6da95;">)</span><span class="t" style="right:1571.6px;top:199px;height:13px;line-height:13px;font-size:8.274px;color:#7d839f;font-family:'Liberation Mono',monospace;-webkit-text-stroke:0.15px currentColor;">71</span><span class="c" style="left:485.12px;top:199px;color:#eed49f;">}</span><span class="t" style="right:1571.6px;top:212px;height:13px;line-height:13px;font-size:8.274px;color:#7d839f;font-family:'Liberation Mono',monospace;-webkit-text-stroke:0.15px currentColor;">72</span><span class="c" style="left:465.26px;top:212px;color:#f5a97f;">}</span><span class="t" style="right:1571.6px;top:225px;height:13px;line-height:13px;font-size:8.274px;color:#7d839f;font-family:'Liberation Mono',monospace;-webkit-text-stroke:0.15px currentColor;">73</span><span class="c" style="left:465.26px;top:225px;color:#eed49f;">fmt</span><span class="c" style="left:480.155px;top:225px;color:#939ab7;">.</span><span class="c" style="left:485.12px;top:225px;color:#8aadf4;font-style:italic;">Println</span><span class="c" style="left:519.875px;top:225px;color:#f5a97f;">(</span><span class="c" style="left:524.84px;top:225px;color:#eed49f;">strings</span><span class="c" style="left:559.595px;top:225px;color:#939ab7;">.</span><span class="c" style="left:564.56px;top:225px;color:#8aadf4;font-style:italic;">Repeat</span><span class="c" style="left:594.35px;top:225px;color:#eed49f;">(</span><span class="c" style="left:599.315px;top:225px;color:#a6da95;">"-"</span><span class="c" style="left:614.21px;top:225px;color:#939ab7;">,</span><span class="c" style="left:624.14px;top:225px;color:#f5a97f;">80</span><span class="c" style="left:634.07px;top:225px;color:#eed49f;">)</span><span class="c" style="left:639.035px;top:225px;color:#f5a97f;">)</span><span class="t" style="right:1571.6px;top:237px;height:13px;line-height:13px;font-size:8.274px;color:#7d839f;font-family:'Liberation Mono',monospace;-webkit-text-stroke:0.15px currentColor;">74</span><span class="c" style="left:465.26px;top:237px;color:#eed49f;">fmt</span><span class="c" style="left:480.155px;top:237px;color:#939ab7;">.</span><span class="c" style="left:485.12px;top:237px;color:#8aadf4;font-style:italic;">Println</span><span class="c" style="left:519.875px;top:237px;color:#f5a97f;">(</span><span class="c" style="left:524.84px;top:237px;color:#f5a97f;">)</span><span class="t" style="right:1571.6px;top:250px;height:13px;line-height:13px;font-size:8.274px;color:#7d839f;font-family:'Liberation Mono',monospace;-webkit-text-stroke:0.15px currentColor;">75</span><span class="t" style="right:1571.6px;top:263px;height:13px;line-height:13px;font-size:8.274px;color:#7d839f;font-family:'Liberation Mono',monospace;-webkit-text-stroke:0.15px currentColor;">76</span><span class="c" style="left:465.26px;top:263px;color:#939ab7;font-style:italic;">// Example 1: Non-streaming compression</span><span class="t" style="right:1571.6px;top:275px;height:13px;line-height:13px;font-size:8.274px;color:#7d839f;font-family:'Liberation Mono',monospace;-webkit-text-stroke:0.15px currentColor;">77</span><span class="c" style="left:465.26px;top:275px;color:#eed49f;">fmt</span><span class="c" style="left:480.155px;top:275px;color:#939ab7;">.</span><span class="c" style="left:485.12px;top:275px;color:#8aadf4;font-style:italic;">Println</span><span class="c" style="left:519.875px;top:275px;color:#f5a97f;">(</span><span class="c" style="left:524.84px;top:275px;color:#a6da95;">"=== Non-streaming Compression ==="</span><span class="c" style="left:698.615px;top:275px;color:#f5a97f;">)</span><span class="t" style="right:1571.6px;top:288px;height:13px;line-height:13px;font-size:8.274px;color:#7d839f;font-family:'Liberation Mono',monospace;-webkit-text-stroke:0.15px currentColor;">78</span><span class="c" style="left:465.26px;top:288px;color:#eed49f;">fmt</span><span class="c" style="left:480.155px;top:288px;color:#939ab7;">.</span><span class="c" style="left:485.12px;top:288px;color:#8aadf4;font-style:italic;">Println</span><span class="c" style="left:519.875px;top:288px;color:#f5a97f;">(</span><span class="c" style="left:524.84px;top:288px;color:#f5a97f;">)</span><span class="t" style="right:1571.6px;top:301px;height:13px;line-height:13px;font-size:8.274px;color:#7d839f;font-family:'Liberation Mono',monospace;-webkit-text-stroke:0.15px currentColor;">79</span><span class="t" style="right:1571.6px;top:313px;height:13px;line-height:13px;font-size:8.274px;color:#7d839f;font-family:'Liberation Mono',monospace;-webkit-text-stroke:0.15px currentColor;">80</span><span class="c" style="left:465.26px;top:313px;color:#cad3f5;">compressSpinner</span><span class="c" style="left:544.7px;top:313px;color:#8bd5ca;">:=</span><span class="c" style="left:559.595px;top:313px;color:#eed49f;">spinner</span><span class="c" style="left:594.35px;top:313px;color:#939ab7;">.</span><span class="c" style="left:599.315px;top:313px;color:#8aadf4;font-style:italic;">NewColor</span><span class="c" style="left:639.035px;top:313px;color:#f5a97f;">(</span><span class="c" style="left:644px;top:313px;color:#a6da95;">""</span><span class="c" style="left:653.93px;top:313px;color:#f5a97f;">)</span><span class="c" style="left:658.895px;top:313px;color:#939ab7;">.</span><span class="c" style="left:663.86px;top:313px;color:#8aadf4;font-style:italic;">SetSuffix</span><span class="c" style="left:708.545px;top:313px;color:#f5a97f;">(</span><span class="c" style="left:713.51px;top:313px;color:#a6da95;">"compressing..."</span><span class="c" style="left:792.95px;top:313px;color:#f5a97f;">)</span><span class="c" style="left:797.915px;top:313px;color:#939ab7;">.</span><span class="c" style="left:802.88px;top:313px;color:#8aadf4;font-style:italic;">SetFrames</span><span class="c" style="left:847.565px;top:313px;color:#f5a97f;">(</span><span class="c" style="left:852.53px;top:313px;color:#eed49f;">spinner</span><span class="c" style="left:887.285px;top:313px;color:#939ab7;">.</span><span class="c" style="left:892.25px;top:313px;color:#cad3f5;">FramesPulsingStar</span><span class="c" style="left:976.655px;top:313px;color:#f5a97f;">)</span><span class="t" style="right:1571.6px;top:326px;height:13px;line-height:13px;font-size:8.274px;color:#b7bdf8;font-family:'Liberation Mono',monospace;-webkit-text-stroke:0.15px currentColor;">81</span><span class="c" style="left:465.26px;top:326px;color:#cad3f5;">compressSpinner</span><span class="c" style="left:539.735px;top:326px;color:#939ab7;">.</span><span class="c" style="left:544.7px;top:326px;color:#8aadf4;font-style:italic;">SetFrameColor</span><span class="c" style="left:609.245px;top:326px;color:#f5a97f;">(</span><span class="c" style="left:614.21px;top:326px;color:#eed49f;">spinner</span><span class="c" style="left:648.965px;top:326px;color:#939ab7;">.</span><span class="c" style="left:653.93px;top:326px;color:#f5a97f;">ColorGreen</span><span class="c" style="left:703.58px;top:326px;color:#f5a97f;">)</span><span class="t" style="right:1571.6px;top:339px;height:13px;line-height:13px;font-size:8.274px;color:#7d839f;font-family:'Liberation Mono',monospace;-webkit-text-stroke:0.15px currentColor;">82</span><span class="c" style="left:465.26px;top:339px;color:#cad3f5;">compressSpinner</span><span class="c" style="left:539.735px;top:339px;color:#939ab7;">.</span><span class="c" style="left:544.7px;top:339px;color:#8aadf4;font-style:italic;">Start</span><span class="c" style="left:569.525px;top:339px;color:#f5a97f;">(</span><span class="c" style="left:574.49px;top:339px;color:#f5a97f;">)</span><span class="t" style="right:1571.6px;top:351px;height:13px;line-height:13px;font-size:8.274px;color:#7d839f;font-family:'Liberation Mono',monospace;-webkit-text-stroke:0.15px currentColor;">83</span><span class="t" style="right:1571.6px;top:364px;height:13px;line-height:13px;font-size:8.274px;color:#7d839f;font-family:'Liberation Mono',monospace;-webkit-text-stroke:0.15px currentColor;">84</span><span class="c" style="left:465.26px;top:364px;color:#cad3f5;">compressed</span><span class="c" style="left:514.91px;top:364px;color:#939ab7;">,</span><span class="c" style="left:524.84px;top:364px;color:#cad3f5;">err</span><span class="c" style="left:544.7px;top:364px;color:#8bd5ca;">:=</span><span class="c" style="left:559.595px;top:364px;color:#cad3f5;">compressor</span><span class="c" style="left:609.245px;top:364px;color:#939ab7;">.</span><span class="c" style="left:614.21px;top:364px;color:#8aadf4;font-style:italic;">CompressMessages</span><span class="c" style="left:693.65px;top:364px;color:#f5a97f;">(</span><span class="c" style="left:698.615px;top:364px;color:#cad3f5;">messages</span><span class="c" style="left:738.335px;top:364px;color:#f5a97f;">)</span><span class="t" style="right:1571.6px;top:377px;height:13px;line-height:13px;font-size:8.274px;color:#7d839f;font-family:'Liberation Mono',monospace;-webkit-text-stroke:0.15px currentColor;">85</span><span class="c" style="left:465.26px;top:377px;color:#c6a0f6;">if</span><span class="c" style="left:480.155px;top:377px;color:#cad3f5;">err</span><span class="c" style="left:500.015px;top:377px;color:#8bd5ca;">!=</span><span class="c" style="left:514.91px;top:377px;color:#c6a0f6;">nil</span><span class="c" style="left:534.77px;top:377px;color:#f5a97f;">{</span><span class="t" style="right:1571.6px;top:390px;height:13px;line-height:13px;font-size:8.274px;color:#7d839f;font-family:'Liberation Mono',monospace;-webkit-text-stroke:0.15px currentColor;">86</span><span class="c" style="left:485.12px;top:390px;color:#c6a0f6;">if</span><span class="c" style="left:500.015px;top:390px;color:#cad3f5;">compressSpinner</span><span class="c" style="left:574.49px;top:390px;color:#939ab7;">.</span><span class="c" style="left:579.455px;top:390px;color:#8aadf4;font-style:italic;">IsRunning</span><span class="c" style="left:624.14px;top:390px;color:#eed49f;">(</span><span class="c" style="left:629.105px;top:390px;color:#eed49f;">)</span><span class="c" style="left:639.035px;top:390px;color:#eed49f;">{</span><span class="t" style="right:1571.6px;top:402px;height:13px;line-height:13px;font-size:8.274px;color:#7d839f;font-family:'Liberation Mono',monospace;-webkit-text-stroke:0.15px currentColor;">87</span><span class="c" style="left:504.98px;top:402px;color:#cad3f5;">compressSpinner</span><span class="c" style="left:579.455px;top:402px;color:#939ab7;">.</span><span class="c" style="left:584.42px;top:402px;color:#8aadf4;font-style:italic;">Error</span><span class="c" style="left:609.245px;top:402px;color:#a6da95;">(</span><span class="c" style="left:614.21px;top:402px;color:#a6da95;">"Failed to compress context!"</span><span class="c" style="left:758.195px;top:402px;color:#a6da95;">)</span><span class="t" style="right:1571.6px;top:415px;height:13px;line-height:13px;font-size:8.274px;color:#7d839f;font-family:'Liberation Mono',monospace;-webkit-text-stroke:0.15px currentColor;">88</span><span class="c" style="left:485.12px;top:415px;color:#eed49f;">}</span><span class="t" style="right:1571.6px;top:428px;height:13px;line-height:13px;font-size:8.274px;color:#7d839f;font-family:'Liberation Mono',monospace;-webkit-text-stroke:0.15px currentColor;">89</span><span class="c" style="left:485.12px;top:428px;color:#eed49f;">log</span><span class="c" style="left:500.015px;top:428px;color:#939ab7;">.</span><span class="c" style="left:504.98px;top:428px;color:#8aadf4;font-style:italic;">Fatalf</span><span class="c" style="left:534.77px;top:428px;color:#eed49f;">(</span><span class="c" style="left:539.735px;top:428px;color:#a6da95;">"Error compressing messages: %v"</span><span class="c" style="left:698.615px;top:428px;color:#939ab7;">,</span><span class="c" style="left:708.545px;top:428px;color:#cad3f5;">err</span><span class="c" style="left:723.44px;top:428px;color:#eed49f;">)</span><span class="t" style="right:1571.6px;top:440px;height:13px;line-height:13px;font-size:8.274px;color:#7d839f;font-family:'Liberation Mono',monospace;-webkit-text-stroke:0.15px currentColor;">90</span><span class="c" style="left:465.26px;top:440px;color:#f5a97f;">}</span><span class="t" style="right:1571.6px;top:453px;height:13px;line-height:13px;font-size:8.274px;color:#7d839f;font-family:'Liberation Mono',monospace;-webkit-text-stroke:0.15px currentColor;">91</span><span class="t" style="right:1571.6px;top:466px;height:13px;line-height:13px;font-size:8.274px;color:#7d839f;font-family:'Liberation Mono',monospace;-webkit-text-stroke:0.15px currentColor;">92</span><span class="c" style="left:465.26px;top:466px;color:#eed49f;">fmt</span><span class="c" style="left:480.155px;top:466px;color:#939ab7;">.</span><span class="c" style="left:485.12px;top:466px;color:#8aadf4;font-style:italic;">Println</span><span class="c" style="left:519.875px;top:466px;color:#f5a97f;">(</span><span class="c" style="left:524.84px;top:466px;color:#a6da95;">"Compressed conversation:"</span><span class="c" style="left:653.93px;top:466px;color:#f5a97f;">)</span><span class="t" style="right:1571.6px;top:478px;height:13px;line-height:13px;font-size:8.274px;color:#7d839f;font-family:'Liberation Mono',monospace;-webkit-text-stroke:0.15px currentColor;">93</span><span class="c" style="left:465.26px;top:478px;color:#eed49f;">fmt</span><span class="c" style="left:480.155px;top:478px;color:#939ab7;">.</span><span class="c" style="left:485.12px;top:478px;color:#8aadf4;font-style:italic;">Println</span><span class="c" style="left:519.875px;top:478px;color:#f5a97f;">(</span><span class="c" style="left:524.84px;top:478px;color:#eed49f;">strings</span><span class="c" style="left:559.595px;top:478px;color:#939ab7;">.</span><span class="c" style="left:564.56px;top:478px;color:#8aadf4;font-style:italic;">Repeat</span><span class="c" style="left:594.35px;top:478px;color:#eed49f;">(</span><span class="c" style="left:599.315px;top:478px;color:#a6da95;">"-"</span><span class="c" style="left:614.21px;top:478px;color:#939ab7;">,</span><span class="c" style="left:624.14px;top:478px;color:#f5a97f;">80</span><span class="c" style="left:634.07px;top:478px;color:#eed49f;">)</span><span class="c" style="left:639.035px;top:478px;color:#f5a97f;">)</span><span class="t" style="right:1571.6px;top:491px;height:13px;line-height:13px;font-size:8.274px;color:#7d839f;font-family:'Liberation Mono',monospace;-webkit-text-stroke:0.15px currentColor;">94</span><span class="c" style="left:465.26px;top:491px;color:#eed49f;">fmt</span><span class="c" style="left:480.155px;top:491px;color:#939ab7;">.</span><span class="c" style="left:485.12px;top:491px;color:#8aadf4;font-style:italic;">Println</span><span class="c" style="left:519.875px;top:491px;color:#f5a97f;">(</span><span class="c" style="left:524.84px;top:491px;color:#cad3f5;">compressed</span><span class="c" style="left:574.49px;top:491px;color:#939ab7;">.</span><span class="c" style="left:579.455px;top:491px;color:#cad3f5;">Text</span><span class="c" style="left:599.315px;top:491px;color:#f5a97f;">)</span><span class="t" style="right:1571.6px;top:504px;height:13px;line-height:13px;font-size:8.274px;color:#7d839f;font-family:'Liberation Mono',monospace;-webkit-text-stroke:0.15px currentColor;">95</span><span class="c" style="left:465.26px;top:504px;color:#eed49f;">fmt</span><span class="c" style="left:480.155px;top:504px;color:#939ab7;">.</span><span class="c" style="left:485.12px;top:504px;color:#8aadf4;font-style:italic;">Println</span><span class="c" style="left:519.875px;top:504px;color:#f5a97f;">(</span><span class="c" style="left:524.84px;top:504px;color:#eed49f;">strings</span><span class="c" style="left:559.595px;top:504px;color:#939ab7;">.</span><span class="c" style="left:564.56px;top:504px;color:#8aadf4;font-style:italic;">Repeat</span><span class="c" style="left:594.35px;top:504px;color:#eed49f;">(</span><span class="c" style="left:599.315px;top:504px;color:#a6da95;">"-"</span><span class="c" style="left:614.21px;top:504px;color:#939ab7;">,</span><span class="c" style="left:624.14px;top:504px;color:#f5a97f;">80</span><span class="c" style="left:634.07px;top:504px;color:#eed49f;">)</span><span class="c" style="left:639.035px;top:504px;color:#f5a97f;">)</span><span class="t" style="right:1571.6px;top:516px;height:13px;line-height:13px;font-size:8.274px;color:#7d839f;font-family:'Liberation Mono',monospace;-webkit-text-stroke:0.15px currentColor;">96</span><span class="c" style="left:465.26px;top:516px;color:#eed49f;">fmt</span><span class="c" style="left:480.155px;top:516px;color:#939ab7;">.</span><span class="c" style="left:485.12px;top:516px;color:#8aadf4;font-style:italic;">Println</span><span class="c" style="left:519.875px;top:516px;color:#f5a97f;">(</span><span class="c" style="left:524.84px;top:516px;color:#f5a97f;">)</span><span class="t" style="right:1571.6px;top:529px;height:13px;line-height:13px;font-size:8.274px;color:#7d839f;font-family:'Liberation Mono',monospace;-webkit-text-stroke:0.15px currentColor;">97</span><span class="c" style="left:465.26px;top:529px;color:#eed49f;">fmt</span><span class="c" style="left:480.155px;top:529px;color:#939ab7;">.</span><span class="c" style="left:485.12px;top:529px;color:#8aadf4;font-style:italic;">Println</span><span class="c" style="left:519.875px;top:529px;color:#f5a97f;">(</span><span class="c" style="left:524.84px;top:529px;color:#a6da95;">"Original size:"</span><span class="c" style="left:604.28px;top:529px;color:#939ab7;">,</span><span class="c" style="left:614.21px;top:529px;color:#cad3f5;">originalSize</span><span class="c" style="left:673.79px;top:529px;color:#939ab7;">,</span><span class="c" style="left:683.72px;top:529px;color:#a6da95;">"characters"</span><span class="c" style="left:743.3px;top:529px;color:#f5a97f;">)</span><span class="t" style="right:1571.6px;top:542px;height:13px;line-height:13px;font-size:8.274px;color:#7d839f;font-family:'Liberation Mono',monospace;-webkit-text-stroke:0.15px currentColor;">98</span><span class="c" style="left:465.26px;top:542px;color:#eed49f;">fmt</span><span class="c" style="left:480.155px;top:542px;color:#939ab7;">.</span><span class="c" style="left:485.12px;top:542px;color:#8aadf4;font-style:italic;">Println</span><span class="c" style="left:519.875px;top:542px;color:#f5a97f;">(</span><span class="c" style="left:524.84px;top:542px;color:#a6da95;">"Compressed size:"</span><span class="c" style="left:614.21px;top:542px;color:#939ab7;">,</span><span class="c" style="left:624.14px;top:542px;color:#8aadf4;font-style:italic;">len</span><span class="c" style="left:639.035px;top:542px;color:#eed49f;">(</span><span class="c" style="left:644px;top:542px;color:#cad3f5;">compressed</span><span class="c" style="left:693.65px;top:542px;color:#939ab7;">.</span><span class="c" style="left:698.615px;top:542px;color:#cad3f5;">Text</span><span class="c" style="left:718.475px;top:542px;color:#eed49f;">)</span><span class="c" style="left:723.44px;top:542px;color:#939ab7;">,</span><span class="c" style="left:733.37px;top:542px;color:#a6da95;">"characters"</span><span class="c" style="left:792.95px;top:542px;color:#f5a97f;">)</span><span class="t" style="right:1571.6px;top:554px;height:13px;line-height:13px;font-size:8.274px;color:#7d839f;font-family:'Liberation Mono',monospace;-webkit-text-stroke:0.15px currentColor;">99</span><span class="c" style="left:465.26px;top:554px;color:#eed49f;">fmt</span><span class="c" style="left:480.155px;top:554px;color:#939ab7;">.</span><span class="c" style="left:485.12px;top:554px;color:#8aadf4;font-style:italic;">Println</span><span class="c" style="left:519.875px;top:554px;color:#f5a97f;">(</span><span class="c" style="left:524.84px;top:554px;color:#a6da95;">"Compression ratio:"</span><span class="c" style="left:624.14px;top:554px;color:#939ab7;">,</span><span class="c" style="left:634.07px;top:554px;color:#eed49f;">fmt</span><span class="c" style="left:648.965px;top:554px;color:#939ab7;">.</span><span class="c" style="left:653.93px;top:554px;color:#8aadf4;font-style:italic;">Sprintf</span><span class="c" style="left:688.685px;top:554px;color:#eed49f;">(</span><span class="c" style="left:693.65px;top:554px;color:#a6da95;">"%.1f%%"</span><span class="c" style="left:733.37px;top:554px;color:#939ab7;">,</span><span class="c" style="left:743.3px;top:554px;color:#a6da95;">(</span><span class="c" style="left:748.265px;top:554px;color:#f5a97f;">1.0</span><span class="c" style="left:763.16px;top:554px;color:#8bd5ca;">-</span><span class="c" style="left:768.125px;top:554px;color:#c6a0f6;font-style:italic;">float64</span><span class="c" style="left:802.88px;top:554px;color:#7dc4e4;">(</span><span class="c" style="left:807.845px;top:554px;color:#8aadf4;font-style:italic;">len</span><span class="c" style="left:822.74px;top:554px;color:#c6a0f6;">(</span><span class="c" style="left:827.705px;top:554px;color:#cad3f5;">compressed</span><span class="c" style="left:877.355px;top:554px;color:#939ab7;">.</span><span class="c" style="left:882.32px;top:554px;color:#cad3f5;">Text</span><span class="c" style="left:902.18px;top:554px;color:#c6a0f6;">)</span><span class="c" style="left:907.145px;top:554px;color:#7dc4e4;">)</span><span class="c" style="left:912.11px;top:554px;color:#8bd5ca;">/</span><span class="c" style="left:917.075px;top:554px;color:#c6a0f6;font-style:italic;">float64</span><span class="c" style="left:951.83px;top:554px;color:#7dc4e4;">(</span><span class="c" style="left:956.795px;top:554px;color:#cad3f5;">originalSize</span><span class="c" style="left:1016.375px;top:554px;color:#7dc4e4;">)</span><span class="c" style="left:1021.34px;top:554px;color:#a6da95;">)</span><span class="c" style="left:1026.305px;top:554px;color:#8bd5ca;">*</span><span class="c" style="left:1031.27px;top:554px;color:#f5a97f;">100</span><span class="c" style="left:1046.165px;top:554px;color:#eed49f;">)</span><span class="c" style="left:1051.13px;top:554px;color:#f5a97f;">)</span><span class="t" style="right:1571.6px;top:567px;height:13px;line-height:13px;font-size:8.274px;color:#7d839f;font-family:'Liberation Mono',monospace;-webkit-text-stroke:0.15px currentColor;">100</span><span class="c" style="left:465.26px;top:567px;color:#eed49f;">fmt</span><span class="c" style="left:480.155px;top:567px;color:#939ab7;">.</span><span class="c" style="left:485.12px;top:567px;color:#8aadf4;font-style:italic;">Println</span><span class="c" style="left:519.875px;top:567px;color:#f5a97f;">(</span><span class="c" style="left:524.84px;top:567px;color:#f5a97f;">)</span><span class="t" style="right:1571.6px;top:580px;height:13px;line-height:13px;font-size:8.274px;color:#7d839f;font-family:'Liberation Mono',monospace;-webkit-text-stroke:0.15px currentColor;">101</span><span class="t" style="right:1571.6px;top:593px;height:13px;line-height:13px;font-size:8.274px;color:#7d839f;font-family:'Liberation Mono',monospace;-webkit-text-stroke:0.15px currentColor;">102</span><span class="c" style="left:465.26px;top:593px;color:#939ab7;font-style:italic;">// Example 2: Streaming compression</span><span class="t" style="right:1571.6px;top:605px;height:13px;line-height:13px;font-size:8.274px;color:#7d839f;font-family:'Liberation Mono',monospace;-webkit-text-stroke:0.15px currentColor;">103</span><span class="c" style="left:465.26px;top:605px;color:#eed49f;">fmt</span><span class="c" style="left:480.155px;top:605px;color:#939ab7;">.</span><span class="c" style="left:485.12px;top:605px;color:#8aadf4;font-style:italic;">Println</span><span class="c" style="left:519.875px;top:605px;color:#f5a97f;">(</span><span class="c" style="left:524.84px;top:605px;color:#a6da95;">"=== Streaming Compression ==="</span><span class="c" style="left:678.755px;top:605px;color:#f5a97f;">)</span><span class="t" style="right:1571.6px;top:618px;height:13px;line-height:13px;font-size:8.274px;color:#7d839f;font-family:'Liberation Mono',monospace;-webkit-text-stroke:0.15px currentColor;">104</span><span class="c" style="left:465.26px;top:618px;color:#eed49f;">fmt</span><span class="c" style="left:480.155px;top:618px;color:#939ab7;">.</span><span class="c" style="left:485.12px;top:618px;color:#8aadf4;font-style:italic;">Println</span><span class="c" style="left:519.875px;top:618px;color:#f5a97f;">(</span><span class="c" style="left:524.84px;top:618px;color:#f5a97f;">)</span><span class="t" style="right:1571.6px;top:631px;height:13px;line-height:13px;font-size:8.274px;color:#7d839f;font-family:'Liberation Mono',monospace;-webkit-text-stroke:0.15px currentColor;">105</span><span class="c" style="left:465.26px;top:631px;color:#eed49f;">fmt</span><span class="c" style="left:480.155px;top:631px;color:#939ab7;">.</span><span class="c" style="left:485.12px;top:631px;color:#8aadf4;font-style:italic;">Println</span><span class="c" style="left:519.875px;top:631px;color:#f5a97f;">(</span><span class="c" style="left:524.84px;top:631px;color:#a6da95;">"Watch the compression happen in real-time:"</span><span class="c" style="left:743.3px;top:631px;color:#f5a97f;">)</span><span class="t" style="right:1571.6px;top:643px;height:13px;line-height:13px;font-size:8.274px;color:#7d839f;font-family:'Liberation Mono',monospace;-webkit-text-stroke:0.15px currentColor;">106</span><span class="c" style="left:465.26px;top:643px;color:#eed49f;">fmt</span><span class="c" style="left:480.155px;top:643px;color:#939ab7;">.</span><span class="c" style="left:485.12px;top:643px;color:#8aadf4;font-style:italic;">Println</span><span class="c" style="left:519.875px;top:643px;color:#f5a97f;">(</span><span class="c" style="left:524.84px;top:643px;color:#eed49f;">strings</span><span class="c" style="left:559.595px;top:643px;color:#939ab7;">.</span><span class="c" style="left:564.56px;top:643px;color:#8aadf4;font-style:italic;">Repeat</span><span class="c" style="left:594.35px;top:643px;color:#eed49f;">(</span><span class="c" style="left:599.315px;top:643px;color:#a6da95;">"-"</span><span class="c" style="left:614.21px;top:643px;color:#939ab7;">,</span><span class="c" style="left:624.14px;top:643px;color:#f5a97f;">80</span><span class="c" style="left:634.07px;top:643px;color:#eed49f;">)</span><span class="c" style="left:639.035px;top:643px;color:#f5a97f;">)</span><span class="t" style="right:1571.6px;top:656px;height:13px;line-height:13px;font-size:8.274px;color:#7d839f;font-family:'Liberation Mono',monospace;-webkit-text-stroke:0.15px currentColor;">107</span><span class="t" style="right:1571.6px;top:669px;height:13px;line-height:13px;font-size:8.274px;color:#7d839f;font-family:'Liberation Mono',monospace;-webkit-text-stroke:0.15px currentColor;">108</span><span class="c" style="left:465.26px;top:669px;color:#cad3f5;">compressSpinner</span><span class="c" style="left:539.735px;top:669px;color:#939ab7;">.</span><span class="c" style="left:544.7px;top:669px;color:#8aadf4;font-style:italic;">SetFrames</span><span class="c" style="left:589.385px;top:669px;color:#f5a97f;">(</span><span class="c" style="left:594.35px;top:669px;color:#eed49f;">spinner</span><span class="c" style="left:629.105px;top:669px;color:#939ab7;">.</span><span class="c" style="left:634.07px;top:669px;color:#cad3f5;">FramesDots</span><span class="c" style="left:683.72px;top:669px;color:#f5a97f;">)</span><span class="t" style="right:1571.6px;top:681px;height:13px;line-height:13px;font-size:8.274px;color:#7d839f;font-family:'Liberation Mono',monospace;-webkit-text-stroke:0.15px currentColor;">109</span><span class="c" style="left:465.26px;top:681px;color:#cad3f5;">streamCompressed</span><span class="c" style="left:544.7px;top:681px;color:#939ab7;">,</span><span class="c" style="left:554.63px;top:681px;color:#cad3f5;">err</span><span class="c" style="left:574.49px;top:681px;color:#8bd5ca;">:=</span><span class="c" style="left:589.385px;top:681px;color:#cad3f5;">compressor</span><span class="c" style="left:639.035px;top:681px;color:#939ab7;">.</span><span class="c" style="left:644px;top:681px;color:#8aadf4;font-style:italic;">CompressMessagesStream</span><span class="c" style="left:753.23px;top:681px;color:#f5a97f;">(</span><span class="c" style="left:758.195px;top:681px;color:#cad3f5;">messages</span><span class="c" style="left:797.915px;top:681px;color:#939ab7;">,</span><span class="c" style="left:807.845px;top:681px;color:#c6a0f6;">func</span><span class="c" style="left:827.705px;top:681px;color:#eed49f;">(</span><span class="c" style="left:832.67px;top:681px;color:#ee99a0;font-style:italic;">chunk</span><span class="c" style="left:862.46px;top:681px;color:#eed49f;font-style:italic;">agents</span><span class="c" style="left:892.25px;top:681px;color:#eed49f;font-style:italic;">.</span><span class="c" style="left:897.215px;top:681px;color:#eed49f;font-style:italic;">ChatResponse</span><span class="c" style="left:956.795px;top:681px;color:#eed49f;">)</span><span class="c" style="left:966.725px;top:681px;color:#c6a0f6;font-style:italic;">error</span><span class="c" style="left:996.515px;top:681px;color:#eed49f;">{</span><span class="t" style="right:1571.6px;top:694px;height:13px;line-height:13px;font-size:8.274px;color:#7d839f;font-family:'Liberation Mono',monospace;-webkit-text-stroke:0.15px currentColor;">110</span><span class="c" style="left:485.12px;top:694px;color:#939ab7;font-style:italic;">//fmt.Print(chunk.Text)</span><span class="t" style="right:1571.6px;top:707px;height:13px;line-height:13px;font-size:8.274px;color:#7d839f;font-family:'Liberation Mono',monospace;-webkit-text-stroke:0.15px currentColor;">111</span><span class="t" style="right:1571.6px;top:719px;height:13px;line-height:13px;font-size:8.274px;color:#7d839f;font-family:'Liberation Mono',monospace;-webkit-text-stroke:0.15px currentColor;">112</span><span class="c" style="left:485.12px;top:719px;color:#cad3f5;">text</span><span class="c" style="left:509.945px;top:719px;color:#8bd5ca;">:=</span><span class="c" style="left:524.84px;top:719px;color:#eed49f;">strings</span><span class="c" style="left:559.595px;top:719px;color:#939ab7;">.</span><span class="c" style="left:564.56px;top:719px;color:#8aadf4;font-style:italic;">ReplaceAll</span><span class="c" style="left:614.21px;top:719px;color:#a6da95;">(</span><span class="c" style="left:619.175px;top:719px;color:#eed49f;">strings</span><span class="c" style="left:653.93px;top:719px;color:#939ab7;">.</span><span class="c" style="left:658.895px;top:719px;color:#8aadf4;font-style:italic;">ReplaceAll</span><span class="c" style="left:708.545px;top:719px;color:#7dc4e4;">(</span><span class="c" style="left:713.51px;top:719px;color:#ee99a0;font-style:italic;">chunk</span><span class="c" style="left:738.335px;top:719px;color:#939ab7;">.</span><span class="c" style="left:743.3px;top:719px;color:#cad3f5;">Text</span><span class="c" style="left:763.16px;top:719px;color:#939ab7;">,</span><span class="c" style="left:773.09px;top:719px;color:#a6da95;">"\n"</span><span class="c" style="left:792.95px;top:719px;color:#939ab7;">,</span><span class="c" style="left:802.88px;top:719px;color:#a6da95;">""</span><span class="c" style="left:812.81px;top:719px;color:#7dc4e4;">)</span><span class="c" style="left:817.775px;top:719px;color:#939ab7;">,</span><span class="c" style="left:827.705px;top:719px;color:#a6da95;">"\r"</span><span class="c" style="left:847.565px;top:719px;color:#939ab7;">,</span><span class="c" style="left:857.495px;top:719px;color:#a6da95;">""</span><span class="c" style="left:867.425px;top:719px;color:#a6da95;">)</span><span class="t" style="right:1571.6px;top:732px;height:13px;line-height:13px;font-size:8.274px;color:#7d839f;font-family:'Liberation Mono',monospace;-webkit-text-stroke:0.15px currentColor;">113</span><span class="c" style="left:485.12px;top:732px;color:#c6a0f6;">if</span><span class="c" style="left:500.015px;top:732px;color:#8aadf4;font-style:italic;">len</span><span class="c" style="left:514.91px;top:732px;color:#a6da95;">(</span><span class="c" style="left:519.875px;top:732px;color:#cad3f5;">text</span><span class="c" style="left:539.735px;top:732px;color:#a6da95;">)</span><span class="c" style="left:549.665px;top:732px;color:#8bd5ca;">&gt;</span><span class="c" style="left:559.595px;top:732px;color:#f5a97f;">20</span><span class="c" style="left:574.49px;top:732px;color:#a6da95;">{</span><span class="t" style="right:1571.6px;top:745px;height:13px;line-height:13px;font-size:8.274px;color:#7d839f;font-family:'Liberation Mono',monospace;-webkit-text-stroke:0.15px currentColor;">114</span><span class="c" style="left:504.98px;top:745px;color:#cad3f5;">text</span><span class="c" style="left:529.805px;top:745px;color:#8bd5ca;">=</span><span class="c" style="left:539.735px;top:745px;color:#cad3f5;">text</span><span class="c" style="left:559.595px;top:745px;color:#7dc4e4;">[</span><span class="c" style="left:564.56px;top:745px;color:#939ab7;">:</span><span class="c" style="left:569.525px;top:745px;color:#f5a97f;">17</span><span class="c" style="left:579.455px;top:745px;color:#7dc4e4;">]</span><span class="c" style="left:589.385px;top:745px;color:#8bd5ca;">+</span><span class="c" style="left:599.315px;top:745px;color:#a6da95;">"..."</span><span class="t" style="right:1571.6px;top:757px;height:13px;line-height:13px;font-size:8.274px;color:#7d839f;font-family:'Liberation Mono',monospace;-webkit-text-stroke:0.15px currentColor;">115</span><span class="c" style="left:485.12px;top:757px;color:#a6da95;">}</span><span class="t" style="right:1571.6px;top:770px;height:13px;line-height:13px;font-size:8.274px;color:#7d839f;font-family:'Liberation Mono',monospace;-webkit-text-stroke:0.15px currentColor;">116</span><span class="c" style="left:485.12px;top:770px;color:#cad3f5;">compressSpinner</span><span class="c" style="left:559.595px;top:770px;color:#939ab7;">.</span><span class="c" style="left:564.56px;top:770px;color:#8aadf4;font-style:italic;">SetSuffix</span><span class="c" style="left:609.245px;top:770px;color:#a6da95;">(</span><span class="c" style="left:614.21px;top:770px;color:#eed49f;">fmt</span><span class="c" style="left:629.105px;top:770px;color:#939ab7;">.</span><span class="c" style="left:634.07px;top:770px;color:#8aadf4;font-style:italic;">Sprintf</span><span class="c" style="left:668.825px;top:770px;color:#7dc4e4;">(</span><span class="c" style="left:673.79px;top:770px;color:#a6da95;">"%-20s"</span><span class="c" style="left:708.545px;top:770px;color:#939ab7;">,</span><span class="c" style="left:718.475px;top:770px;color:#cad3f5;">text</span><span class="c" style="left:738.335px;top:770px;color:#7dc4e4;">)</span><span class="c" style="left:743.3px;top:770px;color:#a6da95;">)</span><span class="t" style="right:1571.6px;top:783px;height:13px;line-height:13px;font-size:8.274px;color:#7d839f;font-family:'Liberation Mono',monospace;-webkit-text-stroke:0.15px currentColor;">117</span><span class="t" style="right:1571.6px;top:796px;height:13px;line-height:13px;font-size:8.274px;color:#7d839f;font-family:'Liberation Mono',monospace;-webkit-text-stroke:0.15px currentColor;">118</span><span class="c" style="left:485.12px;top:796px;color:#c6a0f6;">if</span><span class="c" style="left:500.015px;top:796px;color:#cad3f5;">compressSpinner</span><span class="c" style="left:574.49px;top:796px;color:#939ab7;">.</span><span class="c" style="left:579.455px;top:796px;color:#8aadf4;font-style:italic;">IsRunning</span><span class="c" style="left:624.14px;top:796px;color:#a6da95;">(</span><span class="c" style="left:629.105px;top:796px;color:#a6da95;">)</span><span class="c" style="left:639.035px;top:796px;color:#8bd5ca;">&amp;&amp;</span><span class="c" style="left:653.93px;top:796px;color:#ee99a0;font-style:italic;">chunk</span><span class="c" style="left:678.755px;top:796px;color:#939ab7;">.</span><span class="c" style="left:683.72px;top:796px;color:#cad3f5;">FinishReason</span><span class="c" style="left:748.265px;top:796px;color:#8bd5ca;">==</span><span class="c" style="left:763.16px;top:796px;color:#a6da95;">"stop"</span><span class="c" style="left:797.915px;top:796px;color:#a6da95;">{</span><span class="t" style="right:1571.6px;top:808px;height:13px;line-height:13px;font-size:8.274px;color:#7d839f;font-family:'Liberation Mono',monospace;-webkit-text-stroke:0.15px currentColor;">119</span><span class="c" style="left:504.98px;top:808px;color:#cad3f5;">compressSpinner</span><span class="c" style="left:579.455px;top:808px;color:#939ab7;">.</span><span class="c" style="left:584.42px;top:808px;color:#8aadf4;font-style:italic;">Success</span><span class="c" style="left:619.175px;top:808px;color:#7dc4e4;">(</span><span class="c" style="left:624.14px;top:808px;color:#a6da95;">"Done compressing!"</span><span class="c" style="left:718.475px;top:808px;color:#7dc4e4;">)</span><span class="t" style="right:1571.6px;top:821px;height:13px;line-height:13px;font-size:8.274px;color:#7d839f;font-family:'Liberation Mono',monospace;-webkit-text-stroke:0.15px currentColor;">120</span><span class="c" style="left:504.98px;top:821px;color:#cad3f5;">compressSpinner</span><span class="c" style="left:579.455px;top:821px;color:#939ab7;">.</span><span class="c" style="left:584.42px;top:821px;color:#8aadf4;font-style:italic;">Stop</span><span class="c" style="left:604.28px;top:821px;color:#7dc4e4;">(</span><span class="c" style="left:609.245px;top:821px;color:#7dc4e4;">)</span><span class="t" style="right:1571.6px;top:834px;height:13px;line-height:13px;font-size:8.274px;color:#7d839f;font-family:'Liberation Mono',monospace;-webkit-text-stroke:0.15px currentColor;">121</span><span class="c" style="left:485.12px;top:834px;color:#a6da95;">}</span><span class="t" style="right:1571.6px;top:846px;height:13px;line-height:13px;font-size:8.274px;color:#7d839f;font-family:'Liberation Mono',monospace;-webkit-text-stroke:0.15px currentColor;">122</span><span class="c" style="left:485.12px;top:846px;color:#c6a0f6;">return</span><span class="c" style="left:519.875px;top:846px;color:#c6a0f6;">nil</span><span class="t" style="right:1571.6px;top:859px;height:13px;line-height:13px;font-size:8.274px;color:#7d839f;font-family:'Liberation Mono',monospace;-webkit-text-stroke:0.15px currentColor;">123</span><span class="c" style="left:465.26px;top:859px;color:#eed49f;">}</span><span class="c" style="left:470.225px;top:859px;color:#f5a97f;">)</span><span class="t" style="right:1571.6px;top:872px;height:13px;line-height:13px;font-size:8.274px;color:#7d839f;font-family:'Liberation Mono',monospace;-webkit-text-stroke:0.15px currentColor;">124</span><span class="c" style="left:465.26px;top:872px;color:#c6a0f6;">if</span><span class="c" style="left:480.155px;top:872px;color:#cad3f5;">err</span><span class="c" style="left:500.015px;top:872px;color:#8bd5ca;">!=</span><span class="c" style="left:514.91px;top:872px;color:#c6a0f6;">nil</span><span class="c" style="left:534.77px;top:872px;color:#f5a97f;">{</span><span class="t" style="right:1571.6px;top:884px;height:13px;line-height:13px;font-size:8.274px;color:#7d839f;font-family:'Liberation Mono',monospace;-webkit-text-stroke:0.15px currentColor;">125</span><span class="c" style="left:485.12px;top:884px;color:#eed49f;">log</span><span class="c" style="left:500.015px;top:884px;color:#939ab7;">.</span><span class="c" style="left:504.98px;top:884px;color:#8aadf4;font-style:italic;">Fatalf</span><span class="c" style="left:534.77px;top:884px;color:#eed49f;">(</span><span class="c" style="left:539.735px;top:884px;color:#a6da95;">"Error compressing messages with streaming: %v"</span><span class="c" style="left:773.09px;top:884px;color:#939ab7;">,</span><span class="c" style="left:783.02px;top:884px;color:#cad3f5;">err</span><span class="c" style="left:797.915px;top:884px;color:#eed49f;">)</span><span class="t" style="right:1571.6px;top:897px;height:13px;line-height:13px;font-size:8.274px;color:#7d839f;font-family:'Liberation Mono',monospace;-webkit-text-stroke:0.15px currentColor;">126</span><span class="c" style="left:465.26px;top:897px;color:#f5a97f;">}</span><span class="t" style="right:1571.6px;top:910px;height:13px;line-height:13px;font-size:8.274px;color:#7d839f;font-family:'Liberation Mono',monospace;-webkit-text-stroke:0.15px currentColor;">127</span><span class="t" style="right:1571.6px;top:922px;height:13px;line-height:13px;font-size:8.274px;color:#7d839f;font-family:'Liberation Mono',monospace;-webkit-text-stroke:0.15px currentColor;">128</span><span class="c" style="left:465.26px;top:922px;color:#eed49f;">fmt</span><span class="c" style="left:480.155px;top:922px;color:#939ab7;">.</span><span class="c" style="left:485.12px;top:922px;color:#8aadf4;font-style:italic;">Println</span><span class="c" style="left:519.875px;top:922px;color:#f5a97f;">(</span><span class="c" style="left:524.84px;top:922px;color:#f5a97f;">)</span><span class="t" style="right:1571.6px;top:935px;height:13px;line-height:13px;font-size:8.274px;color:#7d839f;font-family:'Liberation Mono',monospace;-webkit-text-stroke:0.15px currentColor;">129</span><span class="c" style="left:465.26px;top:935px;color:#eed49f;">fmt</span><span class="c" style="left:480.155px;top:935px;color:#939ab7;">.</span><span class="c" style="left:485.12px;top:935px;color:#8aadf4;font-style:italic;">Println</span><span class="c" style="left:519.875px;top:935px;color:#f5a97f;">(</span><span class="c" style="left:524.84px;top:935px;color:#eed49f;">strings</span><span class="c" style="left:559.595px;top:935px;color:#939ab7;">.</span><span class="c" style="left:564.56px;top:935px;color:#8aadf4;font-style:italic;">Repeat</span><span class="c" style="left:594.35px;top:935px;color:#eed49f;">(</span><span class="c" style="left:599.315px;top:935px;color:#a6da95;">"-"</span><span class="c" style="left:614.21px;top:935px;color:#939ab7;">,</span><span class="c" style="left:624.14px;top:935px;color:#f5a97f;">80</span><span class="c" style="left:634.07px;top:935px;color:#eed49f;">)</span><span class="c" style="left:639.035px;top:935px;color:#f5a97f;">)</span><div style="position:absolute;left:400.7px;top:116px;width:1464.5px;height:14px;background:#24273a;"></div><div style="position:absolute;left:401.7px;top:129px;width:1463.500px;height:1px;background:rgba(0,0,0,.36)"></div><div style="position:absolute;left:401.7px;top:130px;width:1463.500px;height:2px;background:linear-gradient(rgba(0,0,0,.16),rgba(0,0,0,0))"></div><span class="t" style="right:1571.6px;top:117px;height:13px;line-height:13px;font-size:8.274px;color:#7d839f;font-family:'Liberation Mono',monospace;-webkit-text-stroke:0.15px currentColor;">17</span><span class="c" style="left:445.4px;top:117px;color:#c6a0f6;">func</span><span class="c" style="left:470.225px;top:117px;color:#8aadf4;font-style:italic;">main</span><span class="c" style="left:490.085px;top:117px;color:#ed8796;">(</span><span class="c" style="left:495.05px;top:117px;color:#ed8796;">)</span><span class="c" style="left:504.98px;top:117px;color:#ed8796;">{</span></div></div><div style="position:absolute;left:1865.2px;top:116px;width:65px;height:828.5px;background:#222538;"></div><div style="position:absolute;left:1865.2px;top:325.055px;width:7.6px;height:12.7px;background:#2f3247;"></div><svg style="position:absolute;left:1865.2px;top:116px;" width="65" height="160" viewBox="0 0 65 160"><rect x="5.732" y="9.183" width="18.65" height="6.431" fill="#a6da95" opacity="0.42"/><rect x="7.662" y="48.09" width="0.965" height="8.682" fill="#eed49f" opacity="0.55"/><rect x="9.591" y="48.09" width="10.932" height="8.682" fill="#8aadf4" opacity="0.36"/><rect x="5.732" y="99.974" width="1.801" height="9.968" fill="#eed49f" opacity="0.4"/><rect x="7.662" y="99.974" width="4.823" height="9.968" fill="#8aadf4" opacity="0.34"/><rect x="5.732" y="111.743" width="1.801" height="4.759" fill="#eed49f" opacity="0.4"/><rect x="7.662" y="111.743" width="4.823" height="4.759" fill="#8aadf4" opacity="0.34"/><rect x="5.732" y="139.203" width="1.801" height="8.81" fill="#eed49f" opacity="0.4"/><rect x="7.662" y="139.203" width="4.823" height="8.81" fill="#8aadf4" opacity="0.34"/><rect x="3.803" y="-0.241" width="3.859" height="1.05" fill="#c6a0f6" opacity="0.4"/><rect x="7.662" y="-0.241" width="2.251" height="1.05" fill="#eed49f" opacity="0.4"/><rect x="3.803" y="1.881" width="2.572" height="1.05" fill="#c6a0f6" opacity="0.4"/><rect x="6.697" y="3.489" width="3.215" height="1.05" fill="#eed49f" opacity="0.4"/><rect x="6.697" y="4.582" width="1.929" height="1.05" fill="#eed49f" opacity="0.4"/><rect x="6.697" y="5.739" width="2.572" height="1.05" fill="#eed49f" opacity="0.4"/><rect x="6.697" y="6.897" width="3.215" height="1.05" fill="#eed49f" opacity="0.4"/><rect x="24.704" y="9.276" width="3.537" height="1.05" fill="#eed49f" opacity="0.4"/><rect x="24.704" y="10.563" width="5.788" height="1.05" fill="#eed49f" opacity="0.4"/><rect x="24.704" y="11.849" width="4.823" height="1.05" fill="#a6da95" opacity="0.4"/><rect x="24.704" y="13.135" width="6.752" height="1.05" fill="#eed49f" opacity="0.4"/><rect x="26.311" y="14.421" width="3.859" height="1.05" fill="#eed49f" opacity="0.4"/><rect x="3.803" y="17.636" width="1.608" height="1.05" fill="#c6a0f6" opacity="0.4"/><rect x="6.376" y="17.636" width="3.215" height="1.05" fill="#8aadf4" opacity="0.4"/><rect x="5.732" y="18.923" width="5.788" height="1.05" fill="#cad3f5" opacity="0.4"/><rect x="11.842" y="18.923" width="4.18" height="1.05" fill="#eed49f" opacity="0.4"/><rect x="16.022" y="18.923" width="8.36" height="1.05" fill="#8aadf4" opacity="0.4"/><rect x="5.732" y="20.209" width="8.36" height="1.05" fill="#cad3f5" opacity="0.4"/><rect x="14.093" y="20.209" width="10.289" height="1.05" fill="#8aadf4" opacity="0.4"/><rect x="24.704" y="20.209" width="26.688" height="1.05" fill="#a6da95" opacity="0.4"/><rect x="52.035" y="20.209" width="10.289" height="1.05" fill="#a6da95" opacity="0.4"/><rect x="5.732" y="23.103" width="5.145" height="1.05" fill="#cad3f5" opacity="0.4"/><rect x="12.806" y="23.103" width="7.717" height="1.05" fill="#cad3f5" opacity="0.4"/><rect x="5.732" y="24.26" width="5.145" height="1.05" fill="#cad3f5" opacity="0.4"/><rect x="12.806" y="24.26" width="3.215" height="1.05" fill="#eed49f" opacity="0.4"/><rect x="16.665" y="24.26" width="15.434" height="1.05" fill="#8aadf4" opacity="0.4"/><rect x="7.983" y="26.961" width="10.611" height="1.05" fill="#eed49f" opacity="0.4"/><rect x="9.913" y="27.926" width="4.18" height="1.05" fill="#cad3f5" opacity="0.4"/><rect x="21.81" y="27.926" width="9.003" height="1.05" fill="#a6da95" opacity="0.4"/><rect x="9.913" y="29.019" width="9.968" height="1.05" fill="#cad3f5" opacity="0.4"/><rect x="9.913" y="30.177" width="4.823" height="1.05" fill="#cad3f5" opacity="0.4"/><rect x="21.167" y="30.177" width="6.431" height="1.05" fill="#cad3f5" opacity="0.4"/><rect x="9.913" y="31.141" width="4.823" height="1.05" fill="#cad3f5" opacity="0.4"/><rect x="21.167" y="31.141" width="4.502" height="1.05" fill="#cad3f5" opacity="0.4"/><rect x="7.983" y="32.62" width="9.968" height="1.05" fill="#eed49f" opacity="0.4"/><rect x="9.913" y="34.035" width="7.395" height="1.05" fill="#cad3f5" opacity="0.4"/><rect x="17.63" y="34.035" width="0.965" height="1.05" fill="#f5a97f" opacity="0.4"/><rect x="19.88" y="34.035" width="28.939" height="1.05" fill="#939ab7" opacity="0.4"/><rect x="7.983" y="35.321" width="0.643" height="1.05" fill="#cad3f5" opacity="0.4"/><rect x="6.376" y="36.608" width="0.643" height="1.05" fill="#c6a0f6" opacity="0.4"/><rect x="6.376" y="37.765" width="0.643" height="1.05" fill="#c6a0f6" opacity="0.4"/><rect x="9.913" y="37.765" width="2.572" height="1.05" fill="#8aadf4" opacity="0.4"/><rect x="7.983" y="38.987" width="1.929" height="1.05" fill="#eed49f" opacity="0.4"/><rect x="10.234" y="38.987" width="3.215" height="1.05" fill="#8aadf4" opacity="0.4"/><rect x="14.736" y="38.987" width="23.151" height="1.05" fill="#a6da95" opacity="0.4"/><rect x="6.054" y="39.952" width="0.643" height="1.05" fill="#cad3f5" opacity="0.4"/><rect x="7.983" y="41.881" width="20.9" height="1.05" fill="#939ab7" opacity="0.4"/><rect x="5.732" y="43.167" width="1.608" height="1.05" fill="#eed49f" opacity="0.4"/><rect x="7.662" y="43.167" width="4.502" height="1.05" fill="#8aadf4" opacity="0.4"/><rect x="12.806" y="43.167" width="28.939" height="1.05" fill="#a6da95" opacity="0.4"/><rect x="5.732" y="46.061" width="5.788" height="1.05" fill="#cad3f5" opacity="0.4"/><rect x="12.806" y="46.061" width="23.151" height="1.05" fill="#cad3f5" opacity="0.4"/><rect x="20.845" y="48.505" width="43.408" height="1.05" fill="#a6da95" opacity="0.4"/><rect x="20.845" y="49.791" width="7.395" height="1.05" fill="#a6da95" opacity="0.4"/><rect x="29.527" y="49.791" width="34.727" height="1.05" fill="#a6da95" opacity="0.4"/><rect x="20.845" y="50.884" width="18.971" height="1.05" fill="#a6da95" opacity="0.4"/><rect x="20.845" y="52.042" width="15.113" height="1.05" fill="#a6da95" opacity="0.4"/><rect x="39.173" y="52.042" width="7.074" height="1.05" fill="#a6da95" opacity="0.4"/><rect x="48.819" y="52.042" width="7.717" height="1.05" fill="#a6da95" opacity="0.4"/><rect x="59.752" y="52.042" width="4.502" height="1.05" fill="#a6da95" opacity="0.4"/><rect x="20.845" y="53.971" width="25.402" height="1.05" fill="#a6da95" opacity="0.4"/><rect x="47.533" y="53.971" width="16.72" height="1.05" fill="#a6da95" opacity="0.4"/><rect x="20.845" y="54.936" width="22.83" height="1.05" fill="#a6da95" opacity="0.4"/><rect x="20.845" y="56.029" width="24.759" height="1.05" fill="#a6da95" opacity="0.4"/><rect x="48.176" y="56.029" width="9.646" height="1.05" fill="#a6da95" opacity="0.4"/><rect x="59.109" y="56.029" width="5.145" height="1.05" fill="#a6da95" opacity="0.4"/><rect x="6.054" y="57.186" width="0.643" height="1.05" fill="#cad3f5" opacity="0.4"/><rect x="6.376" y="59.437" width="13.505" height="1.05" fill="#cad3f5" opacity="0.4"/><rect x="6.054" y="60.723" width="7.395" height="1.05" fill="#cad3f5" opacity="0.4"/><rect x="7.983" y="62.009" width="6.109" height="1.05" fill="#cad3f5" opacity="0.4"/><rect x="14.093" y="62.009" width="6.431" height="1.05" fill="#c6a0f6" opacity="0.4"/><rect x="9.913" y="63.296" width="18.328" height="1.05" fill="#cad3f5" opacity="0.4"/><rect x="7.983" y="64.775" width="0.643" height="1.05" fill="#cad3f5" opacity="0.4"/><rect x="6.054" y="65.868" width="0.643" height="1.05" fill="#cad3f5" opacity="0.4"/><rect x="5.732" y="68.119" width="1.608" height="1.05" fill="#eed49f" opacity="0.4"/><rect x="7.662" y="68.119" width="4.502" height="1.05" fill="#8aadf4" opacity="0.4"/><rect x="12.806" y="68.119" width="12.862" height="1.05" fill="#a6da95" opacity="0.4"/><rect x="7.662" y="69.405" width="6.431" height="1.05" fill="#c6a0f6" opacity="0.4"/><rect x="14.093" y="69.405" width="10.932" height="1.05" fill="#8aadf4" opacity="0.4"/><rect x="7.983" y="70.691" width="6.109" height="1.05" fill="#c6a0f6" opacity="0.4"/><rect x="15.379" y="70.691" width="7.717" height="1.05" fill="#8aadf4" opacity="0.4"/><rect x="7.983" y="71.977" width="3.537" height="1.05" fill="#cad3f5" opacity="0.4"/><rect x="16.665" y="71.977" width="6.431" height="1.05" fill="#c6a0f6" opacity="0.4"/><rect x="7.983" y="74.035" width="2.894" height="1.05" fill="#eed49f" opacity="0.4"/><rect x="11.52" y="74.035" width="4.502" height="1.05" fill="#8aadf4" opacity="0.4"/><rect x="16.665" y="74.035" width="9.003" height="1.05" fill="#a6da95" opacity="0.4"/><rect x="28.241" y="74.035" width="1.286" height="1.05" fill="#f5a97f" opacity="0.4"/><rect x="30.813" y="74.035" width="10.932" height="1.05" fill="#cad3f5" opacity="0.4"/><rect x="7.983" y="75.952" width="3.537" height="1.05" fill="#eed49f" opacity="0.4"/><rect x="12.806" y="75.952" width="3.859" height="1.05" fill="#8aadf4" opacity="0.4"/><rect x="16.986" y="75.952" width="8.039" height="1.05" fill="#a6da95" opacity="0.4"/><rect x="25.668" y="75.952" width="1.929" height="1.05" fill="#f5a97f" opacity="0.4"/><rect x="28.884" y="75.952" width="7.717" height="1.05" fill="#cad3f5" opacity="0.4"/><rect x="7.983" y="77.109" width="0.643" height="1.05" fill="#cad3f5" opacity="0.4"/><rect x="5.732" y="79.038" width="1.608" height="1.05" fill="#eed49f" opacity="0.4"/><rect x="7.662" y="79.038" width="4.502" height="1.05" fill="#8aadf4" opacity="0.4"/><rect x="12.806" y="79.038" width="3.215" height="1.05" fill="#eed49f" opacity="0.4"/><rect x="16.665" y="79.038" width="3.859" height="1.05" fill="#8aadf4" opacity="0.4"/><rect x="20.523" y="79.038" width="2.572" height="1.05" fill="#a6da95" opacity="0.4"/><rect x="23.417" y="79.038" width="1.929" height="1.05" fill="#f5a97f" opacity="0.4"/><rect x="7.983" y="82.897" width="18.971" height="1.05" fill="#939ab7" opacity="0.4"/><rect x="5.732" y="83.99" width="1.608" height="1.05" fill="#eed49f" opacity="0.4"/><rect x="7.662" y="83.99" width="4.502" height="1.05" fill="#8aadf4" opacity="0.4"/><rect x="12.806" y="83.99" width="16.077" height="1.05" fill="#a6da95" opacity="0.4"/><rect x="29.848" y="83.99" width="0.965" height="1.05" fill="#a6da95" opacity="0.4"/><rect x="5.732" y="86.884" width="8.36" height="1.05" fill="#cad3f5" opacity="0.4"/><rect x="15.057" y="86.884" width="5.466" height="1.05" fill="#8bd5ca" opacity="0.4"/><rect x="20.523" y="86.884" width="6.431" height="1.05" fill="#8aadf4" opacity="0.4"/><rect x="27.597" y="86.884" width="5.145" height="1.05" fill="#8aadf4" opacity="0.4"/><rect x="33.385" y="86.884" width="6.431" height="1.05" fill="#a6da95" opacity="0.4"/><rect x="41.745" y="86.884" width="6.431" height="1.05" fill="#8aadf4" opacity="0.4"/><rect x="48.819" y="86.884" width="3.859" height="1.05" fill="#eed49f" opacity="0.4"/><rect x="52.678" y="86.884" width="9.646" height="1.05" fill="#cad3f5" opacity="0.4"/><rect x="5.732" y="88.042" width="8.36" height="1.05" fill="#cad3f5" opacity="0.4"/><rect x="15.057" y="88.042" width="6.752" height="1.05" fill="#8aadf4" opacity="0.4"/><rect x="22.453" y="88.042" width="4.502" height="1.05" fill="#eed49f" opacity="0.4"/><rect x="26.954" y="88.042" width="5.145" height="1.05" fill="#f5a97f" opacity="0.4"/><rect x="15.057" y="88.942" width="2.251" height="1.05" fill="#8aadf4" opacity="0.4"/><rect x="5.732" y="90.743" width="7.717" height="1.05" fill="#cad3f5" opacity="0.4"/><rect x="15.379" y="90.743" width="6.431" height="1.05" fill="#cad3f5" opacity="0.4"/><rect x="22.453" y="90.743" width="8.36" height="1.05" fill="#8aadf4" opacity="0.4"/><rect x="31.456" y="90.743" width="5.145" height="1.05" fill="#cad3f5" opacity="0.4"/><rect x="6.054" y="92.029" width="0.643" height="1.05" fill="#c6a0f6" opacity="0.4"/><rect x="10.234" y="92.029" width="1.286" height="1.05" fill="#cad3f5" opacity="0.4"/><rect x="7.983" y="93.315" width="0.643" height="1.05" fill="#c6a0f6" opacity="0.4"/><rect x="9.913" y="93.315" width="8.039" height="1.05" fill="#cad3f5" opacity="0.4"/><rect x="18.594" y="93.315" width="7.074" height="1.05" fill="#8aadf4" opacity="0.4"/><rect x="9.913" y="94.73" width="8.039" height="1.05" fill="#cad3f5" opacity="0.4"/><rect x="18.594" y="94.73" width="7.074" height="1.05" fill="#8aadf4" opacity="0.4"/><rect x="26.954" y="94.73" width="0.643" height="1.05" fill="#a6da95" opacity="0.4"/><rect x="28.884" y="94.73" width="8.36" height="1.05" fill="#a6da95" opacity="0.4"/><rect x="37.887" y="94.73" width="0.643" height="1.05" fill="#a6da95" opacity="0.4"/><rect x="7.983" y="95.887" width="0.643" height="1.05" fill="#cad3f5" opacity="0.4"/><rect x="7.983" y="96.981" width="1.929" height="1.05" fill="#eed49f" opacity="0.4"/><rect x="10.234" y="96.981" width="3.215" height="1.05" fill="#8aadf4" opacity="0.4"/><rect x="14.736" y="96.981" width="9.003" height="1.05" fill="#a6da95" opacity="0.4"/><rect x="25.025" y="96.981" width="5.788" height="1.05" fill="#a6da95" opacity="0.4"/><rect x="32.742" y="96.981" width="1.929" height="1.05" fill="#cad3f5" opacity="0.4"/><rect x="6.054" y="97.945" width="0.643" height="1.05" fill="#cad3f5" opacity="0.4"/><rect x="12.806" y="99.746" width="14.148" height="1.05" fill="#a6da95" opacity="0.4"/><rect x="12.806" y="100.903" width="3.215" height="1.05" fill="#eed49f" opacity="0.4"/><rect x="16.665" y="100.903" width="3.859" height="1.05" fill="#8aadf4" opacity="0.4"/><rect x="23.417" y="100.903" width="1.608" height="1.05" fill="#f5a97f" opacity="0.4"/><rect x="12.806" y="101.997" width="3.215" height="1.05" fill="#eed49f" opacity="0.4"/><rect x="16.665" y="101.997" width="3.859" height="1.05" fill="#91d7e3" opacity="0.4"/><rect x="12.806" y="103.09" width="3.215" height="1.05" fill="#eed49f" opacity="0.4"/><rect x="16.665" y="103.09" width="3.859" height="1.05" fill="#8aadf4" opacity="0.4"/><rect x="23.417" y="103.09" width="1.608" height="1.05" fill="#f5a97f" opacity="0.4"/><rect x="12.806" y="105.534" width="10.289" height="1.05" fill="#a6da95" opacity="0.4"/><rect x="23.739" y="105.534" width="5.145" height="1.05" fill="#cad3f5" opacity="0.4"/><rect x="30.813" y="105.534" width="5.788" height="1.05" fill="#a6da95" opacity="0.4"/><rect x="12.806" y="106.691" width="7.717" height="1.05" fill="#a6da95" opacity="0.4"/><rect x="21.81" y="106.691" width="9.003" height="1.05" fill="#a6da95" opacity="0.4"/><rect x="32.099" y="106.691" width="3.859" height="1.05" fill="#a6da95" opacity="0.4"/><rect x="36.601" y="106.691" width="5.788" height="1.05" fill="#a6da95" opacity="0.4"/><rect x="12.806" y="107.977" width="10.289" height="1.05" fill="#a6da95" opacity="0.4"/><rect x="24.382" y="107.977" width="1.286" height="1.05" fill="#f5a97f" opacity="0.4"/><rect x="26.311" y="107.977" width="4.502" height="1.05" fill="#8aadf4" opacity="0.4"/><rect x="32.099" y="107.977" width="2.572" height="1.05" fill="#a6da95" opacity="0.4"/><rect x="36.601" y="107.977" width="2.572" height="1.05" fill="#f5a97f" opacity="0.4"/><rect x="39.816" y="107.977" width="3.215" height="1.05" fill="#c6a0f6" opacity="0.4"/><rect x="43.675" y="107.977" width="4.502" height="1.05" fill="#8aadf4" opacity="0.4"/><rect x="48.819" y="107.977" width="5.145" height="1.05" fill="#cad3f5" opacity="0.4"/><rect x="54.607" y="107.977" width="4.502" height="1.05" fill="#c6a0f6" opacity="0.4"/><rect x="59.109" y="107.977" width="5.466" height="1.05" fill="#cad3f5" opacity="0.4"/><rect x="7.983" y="110.678" width="16.399" height="1.05" fill="#939ab7" opacity="0.4"/><rect x="12.806" y="111.964" width="7.074" height="1.05" fill="#a6da95" opacity="0.4"/><rect x="20.845" y="111.964" width="9.003" height="1.05" fill="#a6da95" opacity="0.4"/><rect x="12.806" y="113.894" width="5.788" height="1.05" fill="#a6da95" opacity="0.4"/><rect x="19.237" y="113.894" width="10.289" height="1.05" fill="#a6da95" opacity="0.4"/><rect x="30.813" y="113.894" width="5.788" height="1.05" fill="#a6da95" opacity="0.4"/><rect x="14.093" y="115.501" width="1.929" height="1.05" fill="#eed49f" opacity="0.4"/><rect x="16.665" y="115.501" width="3.859" height="1.05" fill="#8aadf4" opacity="0.4"/><rect x="23.417" y="115.501" width="1.608" height="1.05" fill="#f5a97f" opacity="0.4"/><rect x="5.732" y="117.881" width="8.36" height="1.05" fill="#cad3f5" opacity="0.4"/><rect x="14.736" y="117.881" width="4.502" height="1.05" fill="#cad3f5" opacity="0.4"/><rect x="19.88" y="117.881" width="3.859" height="1.05" fill="#eed49f" opacity="0.4"/><rect x="25.025" y="117.881" width="5.788" height="1.05" fill="#cad3f5" opacity="0.4"/><rect x="5.732" y="119.038" width="9.003" height="1.05" fill="#cad3f5" opacity="0.4"/><rect x="15.057" y="119.038" width="4.823" height="1.05" fill="#cad3f5" opacity="0.4"/><rect x="20.523" y="119.038" width="4.502" height="1.05" fill="#cad3f5" opacity="0.4"/><rect x="25.668" y="119.038" width="16.72" height="1.05" fill="#8aadf4" opacity="0.4"/><rect x="43.675" y="119.038" width="2.572" height="1.05" fill="#c6a0f6" opacity="0.4"/><rect x="46.568" y="119.038" width="2.251" height="1.05" fill="#ed8796" opacity="0.4"/><rect x="49.784" y="119.038" width="2.894" height="1.05" fill="#eed49f" opacity="0.4"/><rect x="53.642" y="119.038" width="6.109" height="1.05" fill="#eed49f" opacity="0.4"/><rect x="60.395" y="119.038" width="3.215" height="1.05" fill="#c6a0f6" opacity="0.4"/><rect x="7.983" y="121.932" width="1.608" height="1.05" fill="#c6a0f6" opacity="0.4"/><rect x="9.913" y="121.932" width="6.109" height="1.05" fill="#cad3f5" opacity="0.4"/><rect x="16.665" y="121.932" width="6.431" height="1.05" fill="#8aadf4" opacity="0.4"/><rect x="23.096" y="121.932" width="3.859" height="1.05" fill="#eed49f" opacity="0.4"/><rect x="26.954" y="121.932" width="5.788" height="1.05" fill="#8aadf4" opacity="0.4"/><rect x="33.385" y="121.932" width="2.251" height="1.05" fill="#ed8796" opacity="0.4"/><rect x="36.601" y="121.932" width="2.251" height="1.05" fill="#cad3f5" opacity="0.4"/><rect x="39.816" y="121.932" width="1.929" height="1.05" fill="#a6da95" opacity="0.4"/><rect x="42.71" y="121.932" width="1.929" height="1.05" fill="#a6da95" opacity="0.4"/><rect x="45.604" y="121.932" width="1.929" height="1.05" fill="#a6da95" opacity="0.4"/><rect x="48.819" y="121.932" width="1.929" height="1.05" fill="#a6da95" opacity="0.4"/><rect x="9.913" y="122.897" width="6.109" height="1.05" fill="#8aadf4" opacity="0.4"/><rect x="16.343" y="122.897" width="2.251" height="1.05" fill="#f5a97f" opacity="0.4"/><rect x="9.913" y="124.055" width="7.395" height="1.05" fill="#cad3f5" opacity="0.4"/><rect x="20.523" y="124.055" width="0.643" height="1.05" fill="#a6da95" opacity="0.4"/><rect x="23.096" y="124.055" width="0.643" height="1.05" fill="#a6da95" opacity="0.4"/><rect x="7.983" y="126.112" width="8.039" height="1.05" fill="#cad3f5" opacity="0.4"/><rect x="16.665" y="126.112" width="7.074" height="1.05" fill="#8aadf4" opacity="0.4"/><rect x="24.704" y="126.112" width="5.466" height="1.05" fill="#8aadf4" opacity="0.4"/><rect x="30.813" y="126.112" width="1.608" height="1.05" fill="#a6da95" opacity="0.4"/><rect x="34.028" y="126.112" width="2.572" height="1.05" fill="#cad3f5" opacity="0.4"/><rect x="7.983" y="127.077" width="8.039" height="1.05" fill="#cad3f5" opacity="0.4"/><rect x="16.665" y="127.077" width="7.074" height="1.05" fill="#8aadf4" opacity="0.4"/><rect x="7.983" y="128.813" width="0.643" height="1.05" fill="#c6a0f6" opacity="0.4"/><rect x="9.913" y="128.813" width="8.039" height="1.05" fill="#cad3f5" opacity="0.4"/><rect x="18.594" y="128.813" width="5.145" height="1.05" fill="#8aadf4" opacity="0.4"/><rect x="24.704" y="128.813" width="0.965" height="1.05" fill="#a6da95" opacity="0.4"/><rect x="26.954" y="128.813" width="3.215" height="1.05" fill="#ed8796" opacity="0.4"/><rect x="30.491" y="128.813" width="6.752" height="1.05" fill="#cad3f5" opacity="0.4"/><rect x="37.887" y="128.813" width="3.859" height="1.05" fill="#a6da95" opacity="0.4"/><rect x="9.913" y="129.971" width="8.039" height="1.05" fill="#cad3f5" opacity="0.4"/><rect x="18.594" y="129.971" width="4.502" height="1.05" fill="#8aadf4" opacity="0.4"/><rect x="23.739" y="129.971" width="1.286" height="1.05" fill="#a6da95" opacity="0.4"/><rect x="26.954" y="129.971" width="5.788" height="1.05" fill="#a6da95" opacity="0.4"/><rect x="9.913" y="131.128" width="8.039" height="1.05" fill="#cad3f5" opacity="0.4"/><rect x="18.594" y="131.128" width="2.572" height="1.05" fill="#8aadf4" opacity="0.4"/><rect x="7.983" y="132.865" width="6.109" height="1.05" fill="#c6a0f6" opacity="0.4"/><rect x="6.054" y="134.794" width="0.643" height="1.05" fill="#c6a0f6" opacity="0.4"/><rect x="9.913" y="134.794" width="2.894" height="1.05" fill="#cad3f5" opacity="0.4"/><rect x="7.983" y="135.952" width="1.929" height="1.05" fill="#eed49f" opacity="0.4"/><rect x="10.234" y="135.952" width="3.215" height="1.05" fill="#8aadf4" opacity="0.4"/><rect x="13.771" y="135.952" width="9.968" height="1.05" fill="#a6da95" opacity="0.4"/><rect x="25.025" y="135.952" width="3.859" height="1.05" fill="#a6da95" opacity="0.4"/><rect x="29.848" y="135.952" width="9.968" height="1.05" fill="#a6da95" opacity="0.4"/><rect x="41.102" y="135.952" width="1.608" height="1.05" fill="#cad3f5" opacity="0.4"/><rect x="6.054" y="137.045" width="0.643" height="1.05" fill="#cad3f5" opacity="0.4"/><rect x="12.806" y="140.903" width="3.215" height="1.05" fill="#eed49f" opacity="0.4"/><rect x="16.665" y="140.903" width="3.859" height="1.05" fill="#8aadf4" opacity="0.4"/><rect x="23.417" y="140.903" width="1.929" height="1.05" fill="#f5a97f" opacity="0.4"/><rect x="12.806" y="142.833" width="10.289" height="1.05" fill="#a6da95" opacity="0.4"/><rect x="23.739" y="142.833" width="5.145" height="1.05" fill="#cad3f5" opacity="0.4"/><rect x="30.813" y="142.833" width="5.145" height="1.05" fill="#a6da95" opacity="0.4"/><rect x="12.806" y="143.797" width="7.717" height="1.05" fill="#a6da95" opacity="0.4"/><rect x="21.81" y="143.797" width="9.003" height="1.05" fill="#a6da95" opacity="0.4"/><rect x="32.099" y="143.797" width="5.145" height="1.05" fill="#a6da95" opacity="0.4"/><rect x="39.173" y="143.797" width="6.431" height="1.05" fill="#a6da95" opacity="0.4"/><rect x="12.806" y="144.955" width="10.289" height="1.05" fill="#a6da95" opacity="0.4"/><rect x="24.382" y="144.955" width="1.286" height="1.05" fill="#f5a97f" opacity="0.4"/><rect x="26.311" y="144.955" width="4.502" height="1.05" fill="#8aadf4" opacity="0.4"/><rect x="32.099" y="144.955" width="2.572" height="1.05" fill="#a6da95" opacity="0.4"/><rect x="36.601" y="144.955" width="2.572" height="1.05" fill="#f5a97f" opacity="0.4"/><rect x="39.816" y="144.955" width="3.215" height="1.05" fill="#c6a0f6" opacity="0.4"/><rect x="43.675" y="144.955" width="4.502" height="1.05" fill="#8aadf4" opacity="0.4"/><rect x="48.819" y="144.955" width="5.145" height="1.05" fill="#cad3f5" opacity="0.4"/><rect x="54.607" y="144.955" width="3.859" height="1.05" fill="#cad3f5" opacity="0.4"/><rect x="58.787" y="144.955" width="4.18" height="1.05" fill="#c6a0f6" opacity="0.4"/><rect x="63.61" y="144.955" width="0.965" height="1.05" fill="#cad3f5" opacity="0.4"/><rect x="12.806" y="147.013" width="4.823" height="1.05" fill="#a6da95" opacity="0.4"/><rect x="18.916" y="147.013" width="11.897" height="1.05" fill="#a6da95" opacity="0.4"/></svg><div style="position:absolute;left:1865.2px;top:129px;width:63px;height:2px;background:linear-gradient(rgba(0,0,0,.25),rgba(0,0,0,0))"></div><div style="position:absolute;left:1865.2px;top:124.8px;width:1.9px;height:2.2px;background:#a0606c;"></div><div style="position:absolute;left:1865.2px;top:128px;width:1.9px;height:4px;background:#6f9466;"></div><div style="position:absolute;left:1865.2px;top:201.8px;width:1.9px;height:4.2px;background:#6f9466;"></div><div style="position:absolute;left:1865.2px;top:209.2px;width:1.9px;height:3.9px;background:#6f9466;"></div><div style="position:absolute;left:1865.2px;top:234px;width:1.9px;height:1px;background:#6f9466;"></div><div style="position:absolute;left:1865.2px;top:236px;width:1.9px;height:12.8px;background:#b3a07a;"></div><div style="position:absolute;left:1930.2px;top:116px;width:8.5px;height:828.5px;background:#212437;"></div><div style="position:absolute;left:1930.2px;top:377.3px;width:8.5px;height:268px;background:#41455b;"></div><div style="position:absolute;left:1930.2px;top:148.5px;width:3.3px;height:7.6px;background:#9a5d69;"></div><div style="position:absolute;left:1930.2px;top:160.2px;width:3.3px;height:13px;background:#6b8f63;"></div><div style="position:absolute;left:1930.2px;top:437.6px;width:3.3px;height:14.6px;background:#62806a;"></div><div style="position:absolute;left:1930.2px;top:465.6px;width:3.3px;height:12.4px;background:#62806a;"></div><div style="position:absolute;left:1930.2px;top:556.2px;width:3.3px;height:4.2px;background:#62806a;"></div><div style="position:absolute;left:1930.2px;top:564px;width:3.3px;height:50px;background:#a39578;"></div><div style="position:absolute;left:1930.2px;top:443.8px;width:8.5px;height:0.9px;background:#a9aec7;"></div><div style="position:absolute;left:1932px;top:443.5px;width:6.7px;height:1.2px;background:#8d92ad;"></div><div style="position:absolute;left:400.7px;top:944px;width:1538px;height:205px;background:#24273a;"></div><div style="position:absolute;left:400.7px;top:944px;width:1538px;height:1px;background:#3d4157;"></div><span class="t" style="left:413.3px;top:951px;height:12px;line-height:12px;font-size:7.2px;color:#8087a2;letter-spacing:-0.101px;-webkit-text-stroke:0.12px currentColor;transform:scaleY(1.13);transform-origin:0 72.4%;">PROBLEMS</span><div style="position:absolute;left:454.400px;top:951.200px;width:14.600px;height:9px;border-radius:4.500px;background:#c6a0f6;color:#181926;font-size:6.300px;line-height:9.400px;text-align:center;font-weight:bold">37</div><span class="t" style="left:482.6px;top:951px;height:12px;line-height:12px;font-size:7.2px;color:#8087a2;letter-spacing:-0.15px;-webkit-text-stroke:0.12px currentColor;transform:scaleY(1.13);transform-origin:0 72.4%;">OUTPUT</span><span class="t" style="left:526.7px;top:951px;height:12px;line-height:12px;font-size:7.2px;color:#8087a2;letter-spacing:-0.17px;-webkit-text-stroke:0.12px currentColor;transform:scaleY(1.13);transform-origin:0 72.4%;">DEBUG CONSOLE</span><span class="t" style="left:602.3px;top:951px;height:12px;line-height:12px;font-size:7.2px;color:#8087a2;letter-spacing:-0.121px;-webkit-text-stroke:0.12px currentColor;transform:scaleY(1.13);transform-origin:0 72.4%;">PORTS</span><span class="t" style="left:641.5px;top:951px;height:12px;line-height:12px;font-size:7.2px;color:#cad3f5;letter-spacing:-0.176px;-webkit-text-stroke:0.12px currentColor;transform:scaleY(1.13);transform-origin:0 72.4%;">TERMINAL</span><div style="position:absolute;left:640px;top:962px;width:38px;height:1px;background:#c6a0f6;"></div><svg style="position:absolute;left:1852.5px;top:950px;color:#c6a0f6" width="10" height="10"><use href="#plus"/></svg><svg style="position:absolute;left:1864.4px;top:951.3px;color:#8087a2" width="7.4" height="7.4"><use href="#chev-d"/></svg><svg style="position:absolute;left:1878.6px;top:951px;color:#8087a2" width="8" height="8"><use href="#dots"/></svg><div style="position:absolute;left:1894px;top:950px;width:1px;height:10px;background:#3d4157;"></div><svg style="position:absolute;left:1902.4px;top:950.4px;color:#c6a0f6" width="9.2" height="9.2"><use href="#maximize"/></svg><svg style="position:absolute;left:1919.6px;top:951.1px;color:#c6a0f6" width="7.8" height="7.8"><use href="#x"/></svg><svg style="position:absolute;left:413.9px;top:977.8px" width="7" height="8" viewBox="0 -7 7 8"><path d="M0.100 -3.500H3.200" stroke="#a6da95" stroke-width="1.250" fill="none"/><path d="M2.500 -5.800L5.600 -3.500 2.500 -1.200z" fill="#a6da95"/></svg><span class="m" style="left:430.4px;top:976px;color:#8bd5ca;font-weight:bold;">11-compressor-agent</span><span class="m" style="left:540.4px;top:976px;color:#8aadf4;font-weight:bold;">git:(</span><span class="m" style="left:567.9px;top:976px;color:#ed8796;font-weight:bold;">main</span><span class="m" style="left:589.9px;top:976px;color:#8aadf4;font-weight:bold;">)</span><svg style="position:absolute;left:600.9px;top:977.8px" width="7" height="8" viewBox="0 -7 7 8"><path d="M0.300 0L4.900 -5.900M1.400 -5.300L4.400 -1.100" stroke="#eed49f" stroke-width="1.100" stroke-linecap="round" fill="none"/></svg><span class="m" style="left:611.9px;top:976px;color:#cad3f5;">go run main.go</span><div style="position:absolute;left:400.7px;top:987px;width:1381px;height:1px;background:#1b1d2c;"></div><span class="m" style="left:413.9px;top:988px;color:#cad3f5;">=== Streaming Compression ===</span><span class="m" style="left:413.9px;top:1011px;color:#cad3f5;">Watch the compression happen in real-time:</span><div style="position:absolute;left:413.9px;top:1028px;width:440px;height:1px;opacity:.85;background:repeating-linear-gradient(90deg,#cad3f5 0,#cad3f5 4.900px,transparent 4.900px,transparent 5.500px)"></div><div style="position:absolute;left:413.9px;top:1062px;width:440px;height:1px;opacity:.85;background:repeating-linear-gradient(90deg,#cad3f5 0,#cad3f5 4.900px,transparent 4.900px,transparent 5.500px)"></div><svg style="position:absolute;left:413.9px;top:1036.18px" width="7" height="8" viewBox="0 -7 7 8"><path d="M0.400 -1.900L1.700 -0.300 5.100 -4.600" stroke="#a6da95" stroke-width="1.350" stroke-linecap="round" stroke-linejoin="round" fill="none"/></svg><span class="m" style="left:424.9px;top:1034px;color:#a6da95;">Done compressing!</span><span class="m" style="left:413.9px;top:1080px;color:#cad3f5;">Original size: 1413 characters</span><span class="m" style="left:413.9px;top:1092px;color:#cad3f5;">Compressed size: 996 characters</span><span class="m" style="left:413.9px;top:1103px;color:#cad3f5;">Compression ratio: 29.5%</span><div style="position:absolute;left:414.2px;top:1126.84px;width:10.400px;height:10.400px;border-radius:1.800px;background:#35c742"></div><svg style="position:absolute;left:414.2px;top:1126.84px;" width="10.4" height="10.4" viewBox="0 0 10.4 10.4"><path d="M2.300 5.500l2.300 2.400L8.300 2.900" fill="none" stroke="#fff" stroke-width="1.500" stroke-linecap="round" stroke-linejoin="round"/></svg><span class="m" style="left:430.4px;top:1126px;color:#cad3f5;">Message compression complete!</span><svg style="position:absolute;left:413.9px;top:1139.86px" width="7" height="8" viewBox="0 -7 7 8"><path d="M0.100 -3.500H3.200" stroke="#a6da95" stroke-width="1.250" fill="none"/><path d="M2.500 -5.800L5.600 -3.500 2.500 -1.200z" fill="#a6da95"/></svg><span class="m" style="left:430.4px;top:1138px;color:#8bd5ca;font-weight:bold;">11-compressor-agent</span><span class="m" style="left:540.4px;top:1138px;color:#8aadf4;font-weight:bold;">git:(</span><span class="m" style="left:567.9px;top:1138px;color:#ed8796;font-weight:bold;">main</span><span class="m" style="left:589.9px;top:1138px;color:#8aadf4;font-weight:bold;">)</span><svg style="position:absolute;left:600.9px;top:1139.86px" width="7" height="8" viewBox="0 -7 7 8"><path d="M0.300 0L4.900 -5.900M1.400 -5.300L4.400 -1.100" stroke="#eed49f" stroke-width="1.100" stroke-linecap="round" fill="none"/></svg><div style="position:absolute;left:611.5px;top:1137.600px;width:5.600px;height:11.300px;border:1px solid #d9c9cc;box-sizing:border-box;opacity:.85"></div><svg style="position:absolute;left:404.8px;top:1140.16px;color:#8aadf4" width="7.6" height="7.6"><use href="#t-wand"/></svg><div style="position:absolute;left:1781px;top:966px;width:1px;height:183.5px;background:#2c3045;"></div><div style="position:absolute;left:1790px;top:966px;width:1px;height:183.5px;background:#2c3045;"></div><div style="position:absolute;left:1781.6px;top:982.8px;width:2.8px;height:4px;background:#a6da95;"></div><div style="position:absolute;left:1781.6px;top:1027.8px;width:2.8px;height:4px;background:#a6da95;"></div><div style="position:absolute;left:1781.6px;top:1065.6px;width:2.8px;height:4px;background:#a6da95;"></div><div style="position:absolute;left:1781.6px;top:1105.6px;width:2.8px;height:4px;background:#a6da95;"></div><div style="position:absolute;left:1781.6px;top:1146px;width:2.8px;height:3.5px;background:#5b6078;"></div><div style="position:absolute;left:1790.2px;top:1021.8px;width:148.5px;height:14px;background:#363a4f;"></div><div style="position:absolute;left:1790px;top:1021.8px;width:1px;height:14px;background:#c6a0f6;"></div><svg style="position:absolute;left:1796.8px;top:967.3px;color:#cad3f5" width="9.4" height="9.4"><use href="#term"/></svg><span class="t" style="left:1809.5px;top:965.8px;height:14px;line-height:14px;font-size:8.32px;color:#cad3f5;letter-spacing:-0.049px;">zsh</span><svg style="position:absolute;left:1796.8px;top:981.4px;color:#c6a0f6" width="9.4" height="9.4"><use href="#term"/></svg><span class="t" style="left:1809.5px;top:979.9px;height:14px;line-height:14px;font-size:8.32px;color:#cad3f5;letter-spacing:-0.049px;">zsh</span><span class="t" style="left:1826.5px;top:982px;height:12px;line-height:12px;font-size:7.6px;color:#a1a8c8;letter-spacing:0.322px;">09-rag-agents</span><svg style="position:absolute;left:1796.8px;top:995.5px;color:#c6a0f6" width="9.4" height="9.4"><use href="#term"/></svg><span class="t" style="left:1809.5px;top:994px;height:14px;line-height:14px;font-size:8.32px;color:#cad3f5;letter-spacing:-0.049px;">zsh</span><span class="t" style="left:1826.5px;top:996px;height:12px;line-height:12px;font-size:7.6px;color:#a1a8c8;letter-spacing:0.29px;">02-stream-completion</span><svg style="position:absolute;left:1796.8px;top:1009.5px;color:#c6a0f6" width="9.4" height="9.4"><use href="#term"/></svg><span class="t" style="left:1809.5px;top:1008px;height:14px;line-height:14px;font-size:8.32px;color:#cad3f5;letter-spacing:-0.049px;">zsh</span><span class="t" style="left:1826.5px;top:1010px;height:12px;line-height:12px;font-size:7.6px;color:#a1a8c8;letter-spacing:0.322px;">09-rag-agents</span><svg style="position:absolute;left:1796.8px;top:1023.5px;color:#c6a0f6" width="9.4" height="9.4"><use href="#term"/></svg><span class="t" style="left:1809.5px;top:1022px;height:14px;line-height:14px;font-size:8.32px;color:#cad3f5;letter-spacing:-0.049px;">zsh</span><span class="t" style="left:1826.5px;top:1024px;height:12px;line-height:12px;font-size:7.6px;color:#a1a8c8;letter-spacing:0.146px;">11-compressor-agent</span><div style="position:absolute;left:62px;top:1149px;width:1877px;height:13.5px;background:#181926;"></div><svg style="position:absolute;left:67.6px;top:1151.3px;color:#939ab7" width="8.8" height="8.8"><use href="#s-remote"/></svg><svg style="position:absolute;left:87.8px;top:1150.7px;color:#cad3f5" width="10" height="10"><use href="#s-branch"/></svg><span class="t" style="left:99.5px;top:1149.7px;height:12px;line-height:12px;font-size:7.7px;color:#cad3f5;letter-spacing:0.063px;">main*</span><svg style="position:absolute;left:124.6px;top:1151.1px;color:#cad3f5" width="9.2" height="9.2"><use href="#s-sync"/></svg><svg style="position:absolute;left:144.6px;top:1151.1px;color:#cad3f5" width="9.2" height="9.2"><use href="#s-error"/></svg><span class="t" style="left:156.8px;top:1149.7px;height:12px;line-height:12px;font-size:7.7px;color:#cad3f5;letter-spacing:0.018px;">28</span><svg style="position:absolute;left:168.6px;top:1151.1px;color:#cad3f5" width="9.2" height="9.2"><use href="#s-warn"/></svg><span class="t" style="left:180.4px;top:1149.7px;height:12px;line-height:12px;font-size:7.7px;color:#cad3f5;">5</span><svg style="position:absolute;left:187.8px;top:1151.1px;color:#cad3f5" width="9.2" height="9.2"><use href="#s-info"/></svg><span class="t" style="left:199.8px;top:1149.7px;height:12px;line-height:12px;font-size:7.7px;color:#cad3f5;">4</span><svg style="position:absolute;left:1594.6px;top:1151.1px;color:#c6a0f6" width="9.2" height="9.2"><use href="#s-zoom"/></svg><span class="t" style="left:1615px;top:1149.7px;height:12px;line-height:12px;font-size:7.7px;color:#cad3f5;letter-spacing:0.192px;">Ln 81, Col 53</span><span class="t" style="left:1674.2px;top:1149.7px;height:12px;line-height:12px;font-size:7.7px;color:#cad3f5;letter-spacing:-0.032px;">Tab Size: 4</span><span class="t" style="left:1723.2px;top:1149.7px;height:12px;line-height:12px;font-size:7.7px;color:#cad3f5;letter-spacing:0.277px;">UTF-8</span><span class="t" style="left:1756.7px;top:1149.7px;height:12px;line-height:12px;font-size:7.7px;color:#cad3f5;letter-spacing:-0.093px;">LF</span><span class="t" style="left:1776px;top:1149.4px;height:12px;line-height:12px;font-size:7.7px;color:#cad3f5;letter-spacing:0.572px;">{ }</span><span class="t" style="left:1789.5px;top:1149.7px;height:12px;line-height:12px;font-size:7.7px;color:#cad3f5;letter-spacing:0.114px;">Go</span><svg style="position:absolute;left:1809.8px;top:1150.7px;color:#cad3f5" width="10.4" height="10.4"><use href="#s-copilot"/></svg><span class="t" style="left:1830.5px;top:1149.7px;height:12px;line-height:12px;font-size:7.7px;color:#cad3f5;letter-spacing:0.265px;">1.25.4</span><svg style="position:absolute;left:1854px;top:1151.3px;color:#cad3f5" width="8.6" height="8.8"><use href="#s-zap"/></svg><svg style="position:absolute;left:1874.4px;top:1150.9px;color:#cad3f5" width="9.6" height="9.6"><use href="#s-prettier"/></svg><span class="t" style="left:1886.2px;top:1149.7px;height:12px;line-height:12px;font-size:7.7px;color:#cad3f5;letter-spacing:0.248px;">Prettier</span><svg style="position:absolute;left:1924.4px;top:1150.9px;color:#cad3f5" width="9.6" height="9.6"><use href="#s-bell"/></svg></div></div><div class="edge"></div></body></html>
